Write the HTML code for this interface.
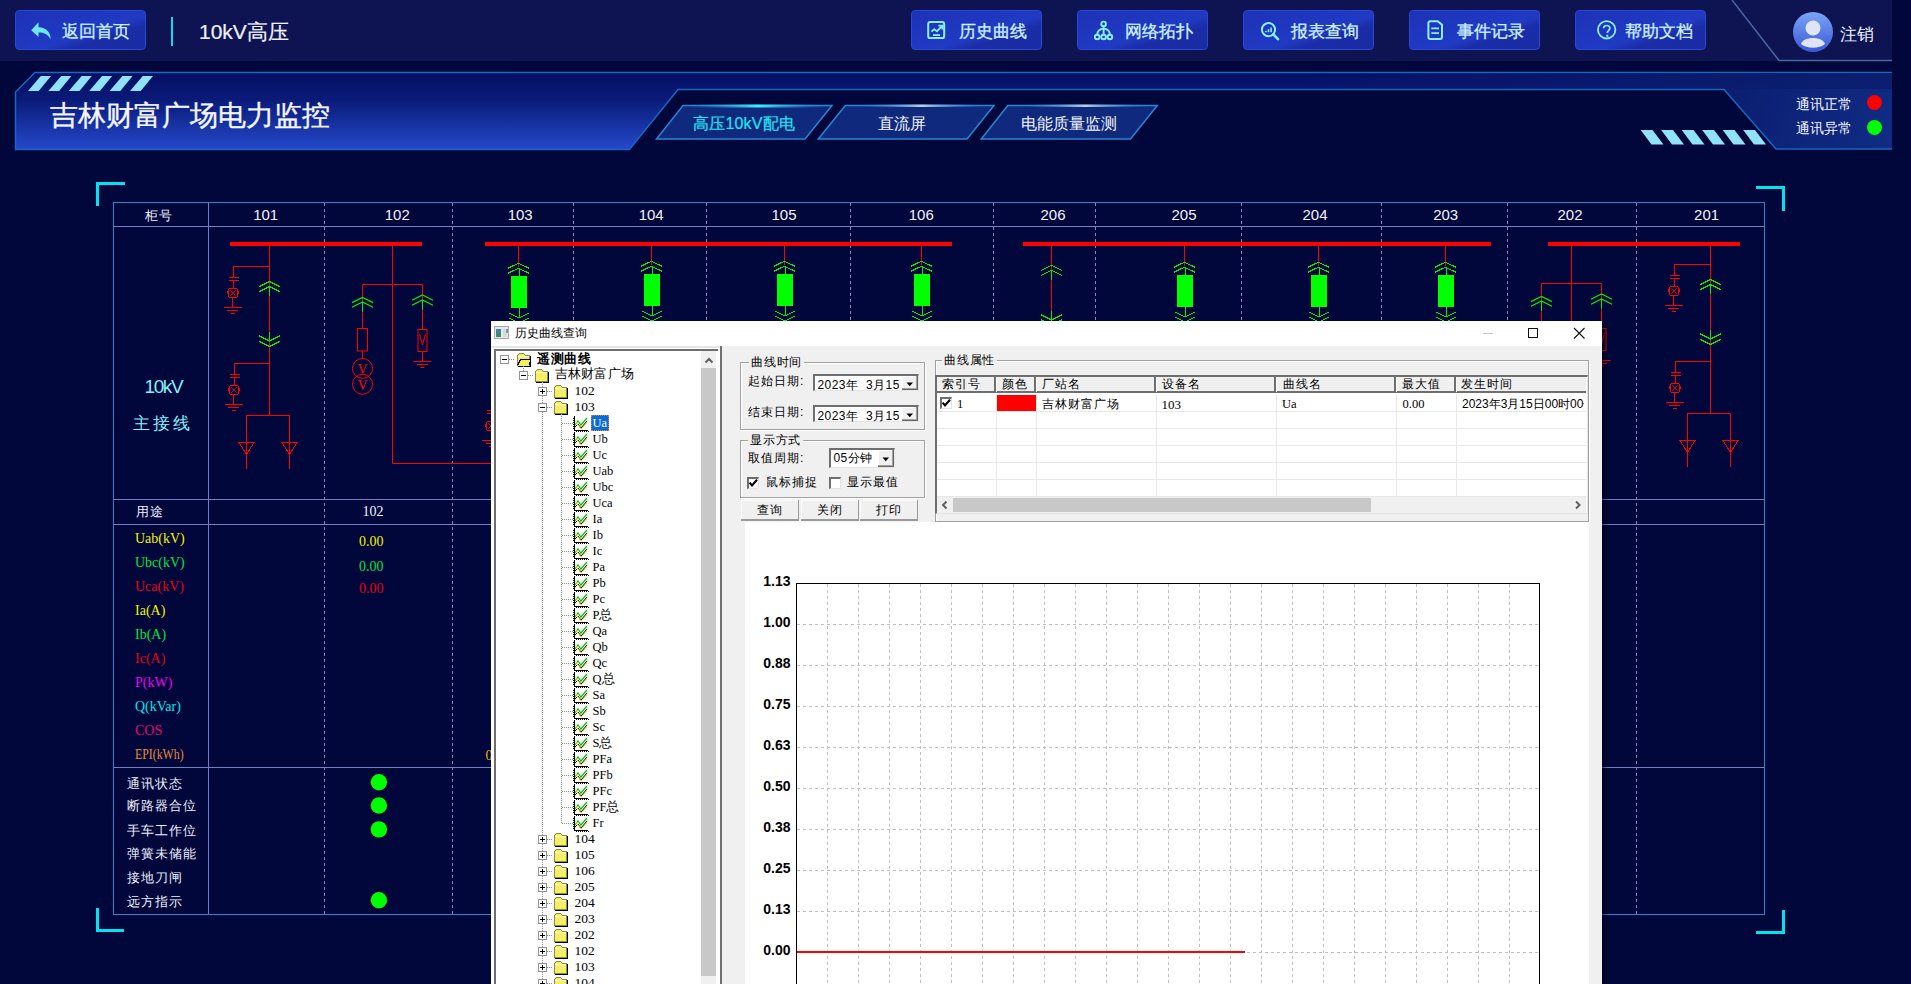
<!DOCTYPE html>
<html><head><meta charset="utf-8">
<style>
*{box-sizing:border-box}
html,body{margin:0;padding:0}
body{width:1911px;height:984px;overflow:hidden;position:relative;background:#01073a;font-family:"Liberation Sans",sans-serif}
.a{position:absolute;line-height:1;white-space:nowrap}
.hb{position:absolute;top:10px;width:131px;height:40px;border:1px solid #2c47d8;border-radius:4px;background:linear-gradient(162deg,#1d33b6 0%,#2039c2 50%,#213ac2 58%,#1a2da6 70%,#192ca4 100%)}
.hb span{position:absolute;top:12px;left:47px;font-size:17px;color:#cdf2fd;line-height:1;-webkit-text-stroke:0.3px #cdf2fd}
.hb svg{position:absolute}
.tab span{position:absolute;line-height:1;font-size:16px;color:#f0f4ff}
.ser{font-family:"Liberation Serif",serif}
.mono{font-family:"Liberation Mono",monospace}
</style></head><body>
<!-- HEADER -->
<div class="a" style="left:0;top:0;width:1892px;height:61px;background:#0e1452"></div>
<svg class="a" style="left:0;top:0" width="1911" height="160">
  <polyline points="1732,0 1779,60.5 1892,60.5" fill="none" stroke="#4866a4" stroke-width="1.5"/>
</svg>
<div class="hb" style="left:15px"><svg style="left:14px;top:9px" width="24" height="22"><path d="M8.5 2.2 L1.2 10.2 L8.5 17 L8.5 12.6 C14 12.3 18 14.4 20.5 19.2 C21 12 16 7.6 8.5 7.2 Z" fill="#6fe6fb"/></svg><span style="left:46px">返回首页</span></div>
<div class="a" style="left:171px;top:17px;width:2px;height:29px;background:#10d8ee"></div>
<div class="a" style="left:199px;top:21px;font-size:21px;color:#eef2ff;-webkit-text-stroke:0.2px #eef2ff">10kV高压</div>
<div class="hb" style="left:911px"><svg style="left:14px;top:10px" width="22" height="22"><rect x="2.2" y="1.1" width="16" height="16" rx="2.2" fill="none" stroke="#8cf0fc" stroke-width="2"/><path d="M5.4 10.6 L8.2 8.3 L10.9 10.3 L15.6 5.3" fill="none" stroke="#8cf0fc" stroke-width="1.8" stroke-linejoin="round"/><path d="M12.4 4.6 H16.3 V8.6" fill="none" stroke="#8cf0fc" stroke-width="1.8"/><path d="M7 14.1 H14" stroke="#8cf0fc" stroke-width="1.8"/></svg><span style="left:46.5px">历史曲线</span></div>
<div class="hb" style="left:1077px"><svg style="left:14px;top:8px" width="22" height="24"><circle cx="11.6" cy="4.9" r="2.3" fill="none" stroke="#8cf0fc" stroke-width="1.9"/><circle cx="5.2" cy="18" r="2.3" fill="none" stroke="#8cf0fc" stroke-width="1.9"/><circle cx="11.6" cy="18" r="2.3" fill="none" stroke="#8cf0fc" stroke-width="1.9"/><circle cx="17.9" cy="18" r="2.3" fill="none" stroke="#8cf0fc" stroke-width="1.9"/><path d="M11.6 7.2 V15.7 M5.2 15.7 C5.5 12 8 9.8 11.6 9.6 C15.2 9.8 17.7 12 17.9 15.7" fill="none" stroke="#8cf0fc" stroke-width="1.9"/></svg><span style="left:47.3px">网络拓扑</span></div>
<div class="hb" style="left:1243px"><svg style="left:15px;top:10px" width="24" height="24"><circle cx="9.5" cy="8.6" r="6.6" fill="none" stroke="#8cf0fc" stroke-width="2"/><path d="M14.3 13.4 L19 18.2" stroke="#8cf0fc" stroke-width="2.6" stroke-linecap="round"/><path d="M6.9 11.3 V9.8 M9.5 11.3 V8.2 M12.1 11.3 V6.6" stroke="#8cf0fc" stroke-width="1.6"/></svg><span style="left:47px">报表查询</span></div>
<div class="hb" style="left:1409px"><svg style="left:15px;top:9px" width="22" height="22"><path d="M3.4 3.2 Q3.4 1.2 5.4 1.2 H12.7 L17 4.7 V17 Q17 18.9 15 18.9 H5.4 Q3.4 18.9 3.4 17 Z" fill="none" stroke="#8cf0fc" stroke-width="2"/><path d="M6.3 8.4 H14 M6.3 13.2 H14" stroke="#8cf0fc" stroke-width="1.7"/></svg><span style="left:46.8px">事件记录</span></div>
<div class="hb" style="left:1575px"><svg style="left:19px;top:8px" width="24" height="24"><circle cx="11.65" cy="10.8" r="8.7" fill="none" stroke="#8cf0fc" stroke-width="1.8"/><path d="M8.6 9.2 C8.6 5.6 14.9 5.6 14.9 9.1 C14.9 11.2 12.3 11.6 12.3 14" fill="none" stroke="#8cf0fc" stroke-width="1.7"/><rect x="11.3" y="15.8" width="2" height="2" fill="#8cf0fc"/></svg><span style="left:48.5px">帮助文档</span></div>
<svg class="a" style="left:1793px;top:12px" width="40" height="40"><defs><linearGradient id="av" x1="0" y1="0" x2="0" y2="1"><stop offset="0" stop-color="#7aa6f4"/><stop offset="1" stop-color="#3a56d8"/></linearGradient></defs><circle cx="20" cy="20" r="20" fill="url(#av)"/><circle cx="20" cy="16" r="7.5" fill="#dfe5f5"/><path d="M8 32 C10 24 30 24 32 32 C26 37 14 37 8 32 Z" fill="#dfe5f5"/></svg>
<div class="a" style="left:1840px;top:26px;font-size:17px;color:#f0f2ff">注销</div>
<!-- BANNER -->
<svg class="a" style="left:0;top:0" width="1911" height="160">
  <defs>
    <linearGradient id="bn" x1="0" y1="72" x2="0" y2="150" gradientUnits="userSpaceOnUse"><stop offset="0" stop-color="#050f62"/><stop offset="0.35" stop-color="#0a1a78"/><stop offset="1" stop-color="#2449cc"/></linearGradient>
    <linearGradient id="bnr" x1="1724" y1="89" x2="1892" y2="150" gradientUnits="userSpaceOnUse"><stop offset="0" stop-color="#0b1e70"/><stop offset="1" stop-color="#102c84"/></linearGradient><linearGradient id="bnb" x1="0" y1="0" x2="1" y2="0"><stop offset="0" stop-color="#0c2070" stop-opacity="0"/><stop offset="1" stop-color="#0c2070" stop-opacity="0.9"/></linearGradient>
    <linearGradient id="tg" x1="0" y1="0" x2="1" y2="0"><stop offset="0" stop-color="#2a80d0" stop-opacity="0"/><stop offset="0.5" stop-color="#40f0ff"/><stop offset="1" stop-color="#2a80d0" stop-opacity="0"/></linearGradient>
    <linearGradient id="tw" x1="0" y1="0" x2="1" y2="0"><stop offset="0" stop-color="#2a80d0" stop-opacity="0"/><stop offset="0.5" stop-color="#b8d0ec"/><stop offset="1" stop-color="#2a80d0" stop-opacity="0"/></linearGradient>
  </defs>
  <polygon points="15.5,92 35,72.5 1892,72.5 1892,149.5 15.5,149.5" fill="url(#bn)"/><polyline points="1892,72.5 35,72.5 15.5,92 15.5,149.5 629,149.5" fill="none" stroke="#1a66c0" stroke-width="1.5"/>
  <polygon points="1724,89 1892,89 1892,149.5 1776,149.5" fill="url(#bnr)"/><rect x="1300" y="73.2" width="592" height="16" fill="url(#bnb)"/>
  <polygon points="678,89.5 1724,89.5 1776,149 1892,149 1892,160 629,160 629,150" fill="#01073a"/>
  <polyline points="629,150 678,89.5 1724,89.5 1776,149 1892,149" fill="none" stroke="#1a66c0" stroke-width="1.5"/>
  <g fill="#8fe2f8">
    <polygon points="28,91 38.7,91 51,76 40.8,76"/>
    <polygon points="48.4,91 59.1,91 71.4,76 61.2,76"/>
    <polygon points="68.8,91 79.5,91 91.8,76 81.6,76"/>
    <polygon points="89.2,91 99.9,91 112.2,76 102,76"/>
    <polygon points="109.6,91 120.3,91 132.6,76 122.4,76"/>
    <polygon points="130,91 140.7,91 153,76 142.8,76"/>
  </g>
  <g fill="#8fe2f8">
    <polygon points="1640.7,130 1652.5,130 1663.5,144.5 1651.5,144.5"/>
    <polygon points="1661.2,130 1673,130 1684,144.5 1672,144.5"/>
    <polygon points="1681.7,130 1693.5,130 1704.5,144.5 1692.5,144.5"/>
    <polygon points="1702.2,130 1714,130 1725,144.5 1713,144.5"/>
    <polygon points="1722.7,130 1734.5,130 1745.5,144.5 1733.5,144.5"/>
    <polygon points="1743.2,130 1755,130 1766,144.5 1754,144.5"/>
  </g>
  <!-- tabs -->
  <polygon points="683,105.5 832,105.5 805,139 656.5,139" fill="#0f2a7c" stroke="#2c84d4" stroke-width="1.5"/>
  <rect x="688" y="104.5" width="140" height="3" fill="url(#tg)"/>
  <polygon points="845.3,105.5 994,105.5 967,139 818.3,139" fill="#0f2a7c" stroke="#2c84d4" stroke-width="1.5"/>
  <rect x="862" y="104.5" width="120" height="2.5" fill="url(#tw)"/>
  <polygon points="1007.8,105.5 1157.3,105.5 1130.5,139 981.3,139" fill="#0f2a7c" stroke="#2c84d4" stroke-width="1.5"/>
  <rect x="1025" y="104.5" width="120" height="2.5" fill="url(#tw)"/>
  <circle cx="1874.5" cy="102.5" r="7.5" fill="#ff0000"/>
  <circle cx="1874.5" cy="127.5" r="7.5" fill="#00ff00"/>
</svg>
<div class="a" style="left:50px;top:102px;font-size:28px;color:#f4f6ff;-webkit-text-stroke:0.35px #f4f6ff">吉林财富广场电力监控</div>
<div class="a" style="left:693px;top:116px;font-size:16px;color:#22e4f6;letter-spacing:0.2px;-webkit-text-stroke:0.2px #22e4f6">高压10kV配电</div>
<div class="a" style="left:878px;top:116px;font-size:16px;color:#f2f4ff">直流屏</div>
<div class="a" style="left:1021px;top:116px;font-size:16px;color:#f2f4ff">电能质量监测</div>
<div class="a" style="left:1796px;top:97px;font-size:14px;color:#f2f4ff">通讯正常</div>
<div class="a" style="left:1796px;top:121px;font-size:14px;color:#f2f4ff">通讯异常</div>
<svg class="a" style="left:0;top:0" width="1911" height="984"><rect x="96" y="182" width="29" height="3" fill="#00e4f2"/><rect x="96" y="182" width="3" height="24" fill="#00e4f2"/><rect x="1756" y="186" width="29" height="3" fill="#00e4f2"/><rect x="1782" y="186" width="3" height="25" fill="#00e4f2"/><rect x="96" y="908" width="3" height="24" fill="#00e4f2"/><rect x="96" y="929" width="28" height="3" fill="#00e4f2"/><rect x="1782" y="910" width="3" height="24" fill="#00e4f2"/><rect x="1756" y="931" width="29" height="3" fill="#00e4f2"/><g shape-rendering="crispEdges"><line x1="114" y1="226.5" x2="1764" y2="226.5" stroke="#6f7fc6" stroke-width="1"/><line x1="114" y1="499.5" x2="1764" y2="499.5" stroke="#6f7fc6" stroke-width="1"/><line x1="114" y1="524.5" x2="1764" y2="524.5" stroke="#6f7fc6" stroke-width="1"/><line x1="114" y1="767.5" x2="1764" y2="767.5" stroke="#6f7fc6" stroke-width="1"/><line x1="208.5" y1="203" x2="208.5" y2="914" stroke="#6f7fc6" stroke-width="1"/><line x1="324.5" y1="203" x2="324.5" y2="914" stroke="#7e87c8" stroke-width="1" stroke-dasharray="3 3"/><line x1="452.5" y1="203" x2="452.5" y2="914" stroke="#7e87c8" stroke-width="1" stroke-dasharray="3 3"/><line x1="573.5" y1="203" x2="573.5" y2="914" stroke="#7e87c8" stroke-width="1" stroke-dasharray="3 3"/><line x1="706.5" y1="203" x2="706.5" y2="914" stroke="#7e87c8" stroke-width="1" stroke-dasharray="3 3"/><line x1="850.5" y1="203" x2="850.5" y2="914" stroke="#7e87c8" stroke-width="1" stroke-dasharray="3 3"/><line x1="993.5" y1="203" x2="993.5" y2="914" stroke="#7e87c8" stroke-width="1" stroke-dasharray="3 3"/><line x1="1095.5" y1="203" x2="1095.5" y2="914" stroke="#7e87c8" stroke-width="1" stroke-dasharray="3 3"/><line x1="1241.5" y1="203" x2="1241.5" y2="914" stroke="#7e87c8" stroke-width="1" stroke-dasharray="3 3"/><line x1="1381.5" y1="203" x2="1381.5" y2="914" stroke="#7e87c8" stroke-width="1" stroke-dasharray="3 3"/><line x1="1507.5" y1="203" x2="1507.5" y2="914" stroke="#7e87c8" stroke-width="1" stroke-dasharray="3 3"/><line x1="1636.5" y1="203" x2="1636.5" y2="914" stroke="#7e87c8" stroke-width="1" stroke-dasharray="3 3"/><rect x="113.5" y="202.5" width="1651" height="712" fill="none" stroke="#1b8bd2"/></g><rect x="230" y="242" width="192" height="4" fill="#ff0000"/><rect x="485" y="242" width="467" height="4" fill="#ff0000"/><rect x="1023" y="242" width="468" height="4" fill="#ff0000"/><rect x="1548" y="242" width="192" height="4" fill="#ff0000"/><g shape-rendering="crispEdges"><line x1="269.5" y1="246" x2="269.5" y2="415.5" stroke="#ff0000" stroke-width="1"/><polyline points="268.5,266.5 233.5,266.5 233.5,277.5" fill="none" stroke="#ff0000"/><line x1="228.5" y1="277.5" x2="238.5" y2="277.5" stroke="#ff0000" stroke-width="1"/><line x1="228.5" y1="280.5" x2="238.5" y2="280.5" stroke="#ff0000" stroke-width="1"/><line x1="233.5" y1="280.5" x2="233.5" y2="288" stroke="#ff0000" stroke-width="1"/><path d="M229 288.5 H237 M229 297.5 H237 M228.5 289 V297 M237.5 289 V297 M227.5 291 V294 M238.5 291 V294" fill="none" stroke="#ff0000" shape-rendering="crispEdges"/><path d="M230.2 290.2 L235.8 295.8 M235.8 290.2 L230.2 295.8" stroke="#ff0000" stroke-width="0.9" shape-rendering="auto"/><line x1="232.5" y1="298" x2="232.5" y2="307.5" stroke="#ff0000" stroke-width="1"/><line x1="223.5" y1="307.5" x2="241.5" y2="307.5" stroke="#ff0000" stroke-width="1"/><line x1="227.0" y1="310.5" x2="238.0" y2="310.5" stroke="#ff0000" stroke-width="1"/><line x1="230.5" y1="313.5" x2="234.5" y2="313.5" stroke="#ff0000" stroke-width="1"/><polyline points="259.0,286.59999999999997 269.5,281.4 280.0,286.59999999999997" fill="none" stroke="#00f000" stroke-width="1.2"/><polyline points="259.0,291.7 269.5,286.5 280.0,291.7" fill="none" stroke="#00f000" stroke-width="1.2"/><line x1="269.5" y1="286.5" x2="269.5" y2="296" stroke="#00f000" stroke-width="1"/><line x1="269.5" y1="332" x2="269.5" y2="341" stroke="#00f000" stroke-width="1"/><polyline points="259.0,335.8 269.5,341 280.0,335.8" fill="none" stroke="#00f000" stroke-width="1.2"/><polyline points="259.0,341.40000000000003 269.5,346.6 280.0,341.40000000000003" fill="none" stroke="#00f000" stroke-width="1.2"/><polyline points="269.5,363.5 234.5,363.5 234.5,374.5" fill="none" stroke="#ff0000"/><line x1="229.5" y1="374.5" x2="239.5" y2="374.5" stroke="#ff0000" stroke-width="1"/><line x1="229.5" y1="377.5" x2="239.5" y2="377.5" stroke="#ff0000" stroke-width="1"/><line x1="234.5" y1="377.5" x2="234.5" y2="385" stroke="#ff0000" stroke-width="1"/><path d="M230 385.5 H238 M230 394.5 H238 M229.5 386 V394 M238.5 386 V394 M228.5 388 V391 M239.5 388 V391" fill="none" stroke="#ff0000" shape-rendering="crispEdges"/><path d="M231.2 387.2 L236.8 392.8 M236.8 387.2 L231.2 392.8" stroke="#ff0000" stroke-width="0.9" shape-rendering="auto"/><line x1="233.5" y1="395" x2="233.5" y2="404.5" stroke="#ff0000" stroke-width="1"/><line x1="224.5" y1="404.5" x2="242.5" y2="404.5" stroke="#ff0000" stroke-width="1"/><line x1="228.0" y1="407.5" x2="239.0" y2="407.5" stroke="#ff0000" stroke-width="1"/><line x1="231.5" y1="410.5" x2="235.5" y2="410.5" stroke="#ff0000" stroke-width="1"/><polyline points="246.5,469 246.5,415.5 289.5,415.5 289.5,469" fill="none" stroke="#ff0000"/><polygon points="239.0,442.5 254.0,442.5 246.5,454.5" fill="none" stroke="#ff0000"/><polygon points="282.0,442.5 297.0,442.5 289.5,454.5" fill="none" stroke="#ff0000"/><line x1="1710.5" y1="244" x2="1710.5" y2="413.5" stroke="#ff0000" stroke-width="1"/><polyline points="1709.5,264.5 1674.5,264.5 1674.5,275.5" fill="none" stroke="#ff0000"/><line x1="1669.5" y1="275.5" x2="1679.5" y2="275.5" stroke="#ff0000" stroke-width="1"/><line x1="1669.5" y1="278.5" x2="1679.5" y2="278.5" stroke="#ff0000" stroke-width="1"/><line x1="1674.5" y1="278.5" x2="1674.5" y2="286" stroke="#ff0000" stroke-width="1"/><path d="M1670 286.5 H1678 M1670 295.5 H1678 M1669.5 287 V295 M1678.5 287 V295 M1668.5 289 V292 M1679.5 289 V292" fill="none" stroke="#ff0000" shape-rendering="crispEdges"/><path d="M1671.2 288.2 L1676.8 293.8 M1676.8 288.2 L1671.2 293.8" stroke="#ff0000" stroke-width="0.9" shape-rendering="auto"/><line x1="1673.5" y1="296" x2="1673.5" y2="305.5" stroke="#ff0000" stroke-width="1"/><line x1="1664.5" y1="305.5" x2="1682.5" y2="305.5" stroke="#ff0000" stroke-width="1"/><line x1="1668.0" y1="308.5" x2="1679.0" y2="308.5" stroke="#ff0000" stroke-width="1"/><line x1="1671.5" y1="311.5" x2="1675.5" y2="311.5" stroke="#ff0000" stroke-width="1"/><polyline points="1700.0,284.59999999999997 1710.5,279.4 1721.0,284.59999999999997" fill="none" stroke="#00f000" stroke-width="1.2"/><polyline points="1700.0,289.7 1710.5,284.5 1721.0,289.7" fill="none" stroke="#00f000" stroke-width="1.2"/><line x1="1710.5" y1="284.5" x2="1710.5" y2="294" stroke="#00f000" stroke-width="1"/><line x1="1710.5" y1="330" x2="1710.5" y2="339" stroke="#00f000" stroke-width="1"/><polyline points="1700.0,333.8 1710.5,339 1721.0,333.8" fill="none" stroke="#00f000" stroke-width="1.2"/><polyline points="1700.0,339.40000000000003 1710.5,344.6 1721.0,339.40000000000003" fill="none" stroke="#00f000" stroke-width="1.2"/><polyline points="1710.5,361.5 1675.5,361.5 1675.5,372.5" fill="none" stroke="#ff0000"/><line x1="1670.5" y1="372.5" x2="1680.5" y2="372.5" stroke="#ff0000" stroke-width="1"/><line x1="1670.5" y1="375.5" x2="1680.5" y2="375.5" stroke="#ff0000" stroke-width="1"/><line x1="1675.5" y1="375.5" x2="1675.5" y2="383" stroke="#ff0000" stroke-width="1"/><path d="M1671 383.5 H1679 M1671 392.5 H1679 M1670.5 384 V392 M1679.5 384 V392 M1669.5 386 V389 M1680.5 386 V389" fill="none" stroke="#ff0000" shape-rendering="crispEdges"/><path d="M1672.2 385.2 L1677.8 390.8 M1677.8 385.2 L1672.2 390.8" stroke="#ff0000" stroke-width="0.9" shape-rendering="auto"/><line x1="1674.5" y1="393" x2="1674.5" y2="402.5" stroke="#ff0000" stroke-width="1"/><line x1="1665.5" y1="402.5" x2="1683.5" y2="402.5" stroke="#ff0000" stroke-width="1"/><line x1="1669.0" y1="405.5" x2="1680.0" y2="405.5" stroke="#ff0000" stroke-width="1"/><line x1="1672.5" y1="408.5" x2="1676.5" y2="408.5" stroke="#ff0000" stroke-width="1"/><polyline points="1687.5,467 1687.5,413.5 1730.5,413.5 1730.5,467" fill="none" stroke="#ff0000"/><polygon points="1680.0,440.5 1695.0,440.5 1687.5,452.5" fill="none" stroke="#ff0000"/><polygon points="1723.0,440.5 1738.0,440.5 1730.5,452.5" fill="none" stroke="#ff0000"/></g><polyline points="392.5,246 392.5,463.5 600,463.5" fill="none" stroke="#ff0000"/><polyline points="362.5,329 362.5,284.5 422.5,284.5 422.5,329.5" fill="none" stroke="#ff0000"/><polyline points="352.0,302.59999999999997 362.5,297.4 373.0,302.59999999999997" fill="none" stroke="#00f000" stroke-width="1.2"/><polyline points="352.0,307.2 362.5,302 373.0,307.2" fill="none" stroke="#00f000" stroke-width="1.2"/><line x1="362.5" y1="302" x2="362.5" y2="312" stroke="#00f000" stroke-width="1"/><rect x="357.5" y="328.5" width="10" height="22.5" fill="none" stroke="#ff0000"/><line x1="362.5" y1="351" x2="362.5" y2="358.5" stroke="#ff0000" stroke-width="1"/><circle cx="362.5" cy="368.4" r="10" fill="none" stroke="#ff0000"/><circle cx="362.5" cy="384.3" r="10" fill="none" stroke="#ff0000"/><text x="362.5" y="374" fill="#ff0000" font-family="Liberation Serif" font-size="14" text-anchor="middle">V</text><text x="362.5" y="390" fill="#ff0000" font-family="Liberation Serif" font-size="14" text-anchor="middle">V</text><polyline points="412.0,300.2 422.5,295 433.0,300.2" fill="none" stroke="#00f000" stroke-width="1.2"/><polyline points="412.0,305.2 422.5,300 433.0,305.2" fill="none" stroke="#00f000" stroke-width="1.2"/><line x1="422.5" y1="300" x2="422.5" y2="310" stroke="#00f000" stroke-width="1"/><rect x="418" y="329.5" width="9" height="22" fill="none" stroke="#ff0000"/><polyline points="419.5,334 422.5,345 425.5,334" fill="none" stroke="#ff0000"/><line x1="422.5" y1="351.5" x2="422.5" y2="361.5" stroke="#ff0000" stroke-width="1"/><line x1="413.5" y1="361.5" x2="431.5" y2="361.5" stroke="#ff0000" stroke-width="1"/><line x1="417.0" y1="364.5" x2="428.0" y2="364.5" stroke="#ff0000" stroke-width="1"/><line x1="420.5" y1="367.5" x2="424.5" y2="367.5" stroke="#ff0000" stroke-width="1"/><line x1="1571.5" y1="246" x2="1571.5" y2="600" stroke="#ff0000" stroke-width="1"/><polyline points="1541.5,328 1541.5,283.5 1601.5,283.5 1601.5,328.5" fill="none" stroke="#ff0000"/><polyline points="1531.0,301.59999999999997 1541.5,296.4 1552.0,301.59999999999997" fill="none" stroke="#00f000" stroke-width="1.2"/><polyline points="1531.0,306.2 1541.5,301 1552.0,306.2" fill="none" stroke="#00f000" stroke-width="1.2"/><line x1="1541.5" y1="301" x2="1541.5" y2="311" stroke="#00f000" stroke-width="1"/><rect x="1536.5" y="327.5" width="10" height="22.5" fill="none" stroke="#ff0000"/><line x1="1541.5" y1="350" x2="1541.5" y2="357.5" stroke="#ff0000" stroke-width="1"/><circle cx="1541.5" cy="367.4" r="10" fill="none" stroke="#ff0000"/><circle cx="1541.5" cy="383.3" r="10" fill="none" stroke="#ff0000"/><text x="1541.5" y="373" fill="#ff0000" font-family="Liberation Serif" font-size="14" text-anchor="middle">V</text><text x="1541.5" y="389" fill="#ff0000" font-family="Liberation Serif" font-size="14" text-anchor="middle">V</text><polyline points="1591.0,299.2 1601.5,294 1612.0,299.2" fill="none" stroke="#00f000" stroke-width="1.2"/><polyline points="1591.0,304.2 1601.5,299 1612.0,304.2" fill="none" stroke="#00f000" stroke-width="1.2"/><line x1="1601.5" y1="299" x2="1601.5" y2="309" stroke="#00f000" stroke-width="1"/><rect x="1597" y="328.5" width="9" height="22" fill="none" stroke="#ff0000"/><polyline points="1598.5,333 1601.5,344 1604.5,333" fill="none" stroke="#ff0000"/><line x1="1601.5" y1="350.5" x2="1601.5" y2="360.5" stroke="#ff0000" stroke-width="1"/><line x1="1592.5" y1="360.5" x2="1610.5" y2="360.5" stroke="#ff0000" stroke-width="1"/><line x1="1596.0" y1="363.5" x2="1607.0" y2="363.5" stroke="#ff0000" stroke-width="1"/><line x1="1599.5" y1="366.5" x2="1603.5" y2="366.5" stroke="#ff0000" stroke-width="1"/><g shape-rendering="crispEdges"><line x1="518.5" y1="246" x2="518.5" y2="267.2" stroke="#ff0000" stroke-width="1"/><polyline points="508.0,268.4 518.5,263.2 529.0,268.4" fill="none" stroke="#00f000" stroke-width="1.2"/><polyline points="508.0,273.4 518.5,268.2 529.0,273.4" fill="none" stroke="#00f000" stroke-width="1.2"/><line x1="519.0" y1="268.2" x2="519.0" y2="276" stroke="#00f000" stroke-width="1"/><rect x="511.0" y="276" width="16" height="32" fill="#00ff00"/><line x1="519.0" y1="308" x2="519.0" y2="318" stroke="#00f000" stroke-width="1"/><polyline points="508.5,312.8 519.0,318 529.5,312.8" fill="none" stroke="#00f000" stroke-width="1.2"/><polyline points="508.5,317.8 519.0,323 529.5,317.8" fill="none" stroke="#00f000" stroke-width="1.2"/><line x1="651.5" y1="246" x2="651.5" y2="265.2" stroke="#ff0000" stroke-width="1"/><polyline points="641.0,266.4 651.5,261.2 662.0,266.4" fill="none" stroke="#00f000" stroke-width="1.2"/><polyline points="641.0,271.4 651.5,266.2 662.0,271.4" fill="none" stroke="#00f000" stroke-width="1.2"/><line x1="652.0" y1="266.2" x2="652.0" y2="274" stroke="#00f000" stroke-width="1"/><rect x="644.0" y="274" width="16" height="32" fill="#00ff00"/><line x1="652.0" y1="306" x2="652.0" y2="316" stroke="#00f000" stroke-width="1"/><polyline points="641.5,310.8 652.0,316 662.5,310.8" fill="none" stroke="#00f000" stroke-width="1.2"/><polyline points="641.5,315.8 652.0,321 662.5,315.8" fill="none" stroke="#00f000" stroke-width="1.2"/><line x1="784.5" y1="246" x2="784.5" y2="265.2" stroke="#ff0000" stroke-width="1"/><polyline points="774.0,266.4 784.5,261.2 795.0,266.4" fill="none" stroke="#00f000" stroke-width="1.2"/><polyline points="774.0,271.4 784.5,266.2 795.0,271.4" fill="none" stroke="#00f000" stroke-width="1.2"/><line x1="785.0" y1="266.2" x2="785.0" y2="274" stroke="#00f000" stroke-width="1"/><rect x="777.0" y="274" width="16" height="32" fill="#00ff00"/><line x1="785.0" y1="306" x2="785.0" y2="316" stroke="#00f000" stroke-width="1"/><polyline points="774.5,310.8 785.0,316 795.5,310.8" fill="none" stroke="#00f000" stroke-width="1.2"/><polyline points="774.5,315.8 785.0,321 795.5,315.8" fill="none" stroke="#00f000" stroke-width="1.2"/><line x1="921.5" y1="246" x2="921.5" y2="265.2" stroke="#ff0000" stroke-width="1"/><polyline points="911.0,266.4 921.5,261.2 932.0,266.4" fill="none" stroke="#00f000" stroke-width="1.2"/><polyline points="911.0,271.4 921.5,266.2 932.0,271.4" fill="none" stroke="#00f000" stroke-width="1.2"/><line x1="922.0" y1="266.2" x2="922.0" y2="274" stroke="#00f000" stroke-width="1"/><rect x="914.0" y="274" width="16" height="32" fill="#00ff00"/><line x1="922.0" y1="306" x2="922.0" y2="316" stroke="#00f000" stroke-width="1"/><polyline points="911.5,310.8 922.0,316 932.5,310.8" fill="none" stroke="#00f000" stroke-width="1.2"/><polyline points="911.5,315.8 922.0,321 932.5,315.8" fill="none" stroke="#00f000" stroke-width="1.2"/><line x1="1184.5" y1="246" x2="1184.5" y2="266.2" stroke="#ff0000" stroke-width="1"/><polyline points="1174.0,267.4 1184.5,262.2 1195.0,267.4" fill="none" stroke="#00f000" stroke-width="1.2"/><polyline points="1174.0,272.4 1184.5,267.2 1195.0,272.4" fill="none" stroke="#00f000" stroke-width="1.2"/><line x1="1185.0" y1="267.2" x2="1185.0" y2="275" stroke="#00f000" stroke-width="1"/><rect x="1177.0" y="275" width="16" height="32" fill="#00ff00"/><line x1="1185.0" y1="307" x2="1185.0" y2="317" stroke="#00f000" stroke-width="1"/><polyline points="1174.5,311.8 1185.0,317 1195.5,311.8" fill="none" stroke="#00f000" stroke-width="1.2"/><polyline points="1174.5,316.8 1185.0,322 1195.5,316.8" fill="none" stroke="#00f000" stroke-width="1.2"/><line x1="1318.5" y1="246" x2="1318.5" y2="266.2" stroke="#ff0000" stroke-width="1"/><polyline points="1308.0,267.4 1318.5,262.2 1329.0,267.4" fill="none" stroke="#00f000" stroke-width="1.2"/><polyline points="1308.0,272.4 1318.5,267.2 1329.0,272.4" fill="none" stroke="#00f000" stroke-width="1.2"/><line x1="1319.0" y1="267.2" x2="1319.0" y2="275" stroke="#00f000" stroke-width="1"/><rect x="1311.0" y="275" width="16" height="32" fill="#00ff00"/><line x1="1319.0" y1="307" x2="1319.0" y2="317" stroke="#00f000" stroke-width="1"/><polyline points="1308.5,311.8 1319.0,317 1329.5,311.8" fill="none" stroke="#00f000" stroke-width="1.2"/><polyline points="1308.5,316.8 1319.0,322 1329.5,316.8" fill="none" stroke="#00f000" stroke-width="1.2"/><line x1="1445.5" y1="246" x2="1445.5" y2="266.2" stroke="#ff0000" stroke-width="1"/><polyline points="1435.0,267.4 1445.5,262.2 1456.0,267.4" fill="none" stroke="#00f000" stroke-width="1.2"/><polyline points="1435.0,272.4 1445.5,267.2 1456.0,272.4" fill="none" stroke="#00f000" stroke-width="1.2"/><line x1="1446.0" y1="267.2" x2="1446.0" y2="275" stroke="#00f000" stroke-width="1"/><rect x="1438.0" y="275" width="16" height="32" fill="#00ff00"/><line x1="1446.0" y1="307" x2="1446.0" y2="317" stroke="#00f000" stroke-width="1"/><polyline points="1435.5,311.8 1446.0,317 1456.5,311.8" fill="none" stroke="#00f000" stroke-width="1.2"/><polyline points="1435.5,316.8 1446.0,322 1456.5,316.8" fill="none" stroke="#00f000" stroke-width="1.2"/><line x1="1051.5" y1="246" x2="1051.5" y2="320" stroke="#ff0000" stroke-width="1"/><polyline points="1041.0,270.5 1051.5,265.3 1062.0,270.5" fill="none" stroke="#00f000" stroke-width="1.2"/><polyline points="1041.0,275.5 1051.5,270.3 1062.0,275.5" fill="none" stroke="#00f000" stroke-width="1.2"/><line x1="1051.5" y1="270.3" x2="1051.5" y2="280" stroke="#00f000" stroke-width="1"/><line x1="1051.5" y1="311" x2="1051.5" y2="320" stroke="#00f000" stroke-width="1"/><polyline points="1041.0,314.8 1051.5,320 1062.0,314.8" fill="none" stroke="#00f000" stroke-width="1.2"/><polyline points="1041.0,319.8 1051.5,325 1062.0,319.8" fill="none" stroke="#00f000" stroke-width="1.2"/><line x1="487" y1="410.5" x2="497" y2="410.5" stroke="#ff0000" stroke-width="1"/><line x1="487" y1="413.5" x2="497" y2="413.5" stroke="#ff0000" stroke-width="1"/><path d="M487 421.5 H495 M487 430.5 H495 M486.5 422 V430 M495.5 422 V430 M485.5 424 V427 M496.5 424 V427" fill="none" stroke="#ff0000" shape-rendering="crispEdges"/><path d="M488.2 423.2 L493.8 428.8 M493.8 423.2 L488.2 428.8" stroke="#ff0000" stroke-width="0.9" shape-rendering="auto"/><line x1="482" y1="440.5" x2="500" y2="440.5" stroke="#ff0000" stroke-width="1"/><line x1="485.5" y1="443.5" x2="496.5" y2="443.5" stroke="#ff0000" stroke-width="1"/><line x1="489" y1="446.5" x2="493" y2="446.5" stroke="#ff0000" stroke-width="1"/></g><circle cx="378.9" cy="782.3" r="8.2" fill="#00ff00"/><circle cx="378.9" cy="805.5" r="8.2" fill="#00ff00"/><circle cx="378.9" cy="829.4" r="8.2" fill="#00ff00"/><circle cx="378.9" cy="900.2" r="8.2" fill="#00ff00"/></svg><div class="a ser" style="left:145px;top:209px;font-size:13px;color:#eef0ff;letter-spacing:1px">柜号</div><div class="a" style="left:235.7px;width:60px;text-align:center;top:207px;font-size:15px;color:#f0f2ff">101</div><div class="a" style="left:367.3px;width:60px;text-align:center;top:207px;font-size:15px;color:#f0f2ff">102</div><div class="a" style="left:490.20000000000005px;width:60px;text-align:center;top:207px;font-size:15px;color:#f0f2ff">103</div><div class="a" style="left:621.2px;width:60px;text-align:center;top:207px;font-size:15px;color:#f0f2ff">104</div><div class="a" style="left:754px;width:60px;text-align:center;top:207px;font-size:15px;color:#f0f2ff">105</div><div class="a" style="left:891.3px;width:60px;text-align:center;top:207px;font-size:15px;color:#f0f2ff">106</div><div class="a" style="left:1023px;width:60px;text-align:center;top:207px;font-size:15px;color:#f0f2ff">206</div><div class="a" style="left:1154px;width:60px;text-align:center;top:207px;font-size:15px;color:#f0f2ff">205</div><div class="a" style="left:1285px;width:60px;text-align:center;top:207px;font-size:15px;color:#f0f2ff">204</div><div class="a" style="left:1415.7px;width:60px;text-align:center;top:207px;font-size:15px;color:#f0f2ff">203</div><div class="a" style="left:1540px;width:60px;text-align:center;top:207px;font-size:15px;color:#f0f2ff">202</div><div class="a" style="left:1676.6px;width:60px;text-align:center;top:207px;font-size:15px;color:#f0f2ff">201</div><div class="a " style="left:144.5px;top:377px;font-size:19px;color:#86eefc;letter-spacing:-1.4px">10kV</div><div class="a ser" style="left:133px;top:415px;font-size:17px;color:#86eefc;letter-spacing:3px">主接线</div><div class="a ser" style="left:135.5px;top:505px;font-size:13px;color:#eef0ff;letter-spacing:1px">用途</div><div class="a ser" style="left:135px;top:532px;font-size:14px;color:#f2f200;">Uab(kV)</div><div class="a ser" style="left:135px;top:556px;font-size:14px;color:#00e43a;">Ubc(kV)</div><div class="a ser" style="left:135px;top:580px;font-size:14px;color:#e80012;">Uca(kV)</div><div class="a ser" style="left:135px;top:604px;font-size:14px;color:#f2f200;">Ia(A)</div><div class="a ser" style="left:135px;top:628px;font-size:14px;color:#00e43a;">Ib(A)</div><div class="a ser" style="left:135px;top:652px;font-size:14px;color:#e80012;">Ic(A)</div><div class="a ser" style="left:135px;top:676px;font-size:14px;color:#ee00f2;">P(kW)</div><div class="a ser" style="left:135px;top:700px;font-size:14px;color:#00e4ea;">Q(kVar)</div><div class="a ser" style="left:135px;top:724px;font-size:14px;color:#f00078;">COS</div><div class="a ser" style="left:135px;top:748px;font-size:14px;color:#e88a3c;transform:scaleX(0.845);transform-origin:0 0">EPI(kWh)</div><div class="a ser" style="left:362.5px;top:505px;font-size:14px;color:#f0f2ff;">102</div><div class="a ser" style="left:359px;top:534.5px;font-size:14px;color:#f2f200;">0.00</div><div class="a ser" style="left:359px;top:559.5px;font-size:14px;color:#00e43a;">0.00</div><div class="a ser" style="left:359px;top:582px;font-size:14px;color:#e80012;">0.00</div><div class="a ser" style="left:485.5px;top:749px;font-size:14px;color:#f0b020;">0.00</div><div class="a ser" style="left:127px;top:777px;font-size:13px;color:#eef0ff;letter-spacing:1px">通讯状态</div><div class="a ser" style="left:127px;top:799.3px;font-size:13px;color:#eef0ff;letter-spacing:1px">断路器合位</div><div class="a ser" style="left:127px;top:823.5px;font-size:13px;color:#eef0ff;letter-spacing:1px">手车工作位</div><div class="a ser" style="left:127px;top:847px;font-size:13px;color:#eef0ff;letter-spacing:1px">弹簧未储能</div><div class="a ser" style="left:127px;top:870.5px;font-size:13px;color:#eef0ff;letter-spacing:1px">接地刀闸</div><div class="a ser" style="left:127px;top:894.5px;font-size:13px;color:#eef0ff;letter-spacing:1px">远方指示</div><div class="a" style="left:491px;top:321px;width:1111px;height:663px;background:#f0f0f0"></div><div class="a" style="left:491px;top:321px;width:1111px;height:25px;background:#fff"></div><div class="a" style="left:1601px;top:321px;width:1px;height:663px;background:#fff"></div><div class="a" style="left:1602px;top:323px;width:7px;height:661px;background:linear-gradient(90deg,rgba(0,0,0,0.45),rgba(0,0,0,0))"></div><svg class="a" style="left:494px;top:326px" width="16" height="14"><rect x="0.5" y="0.5" width="14" height="12" fill="#e8e8e8" stroke="#a8a8a8"/><rect x="2" y="3" width="5" height="8" fill="#3a8a70"/><rect x="2" y="3" width="5" height="3" fill="#4a7ab8"/><rect x="9" y="3" width="4" height="8" fill="#d8dcd8"/><rect x="12" y="3" width="2" height="4" fill="#6aa0c8"/></svg><div class="a" style="left:515px;top:327px;font-size:12px;color:#000">历史曲线查询</div><div class="a" style="left:1483px;top:333px;width:10px;height:1px;background:#c8c8c8"></div><div class="a" style="left:1528px;top:328px;width:10px;height:10px;border:1px solid #111"></div><svg class="a" style="left:1573px;top:327px" width="13" height="13"><path d="M1 1 L11.5 11.5 M11.5 1 L1 11.5" stroke="#111" stroke-width="1.1"/></svg><div class="a" style="left:491px;top:346px;width:229px;height:638px;background:#fff"></div><div class="a" style="left:491px;top:346px;width:229px;height:2px;background:#e6e6e6"></div><div class="a" style="left:720px;top:346px;width:2px;height:638px;background:#707070"></div><div class="a" style="left:494px;top:349px;width:224px;height:2px;background:#6e6e6e"></div><div class="a" style="left:494px;top:349px;width:2px;height:635px;background:#6e6e6e"></div><div class="a" style="left:716px;top:351px;width:2px;height:633px;background:#fff"></div><div class="a" style="left:701px;top:351px;width:15px;height:633px;background:#f0f0f0"></div><div class="a" style="left:701px;top:368px;width:15px;height:608px;background:#c8c8c8"></div><svg class="a" style="left:703px;top:355px" width="12" height="10"><path d="M2.5 7.5 L6 4 L9.5 7.5" fill="none" stroke="#606060" stroke-width="2"/></svg><svg class="a" style="left:491px;top:352px" width="210" height="632" shape-rendering="crispEdges"><rect x="9.5" y="3.5" width="8" height="8" fill="#fff" stroke="#939393"/><line x1="11" y1="7.5" x2="16" y2="7.5" stroke="#000"/><line x1="18" y1="7.5" x2="24" y2="7.5" stroke="#8c8c8c" stroke-dasharray="1 1"/><path d="M26.5 13.5 V3.5 L28.5 1.5 H32.5 L34.5 3.5 H38.5 V13.5 Z" fill="#f4f060" stroke="#8a8a50"/><path d="M27 14.5 H39.5 V4" fill="none" stroke="#000"/><line x1="27" y1="4.5" x2="38" y2="4.5" stroke="#fffff0"/><path d="M26.5 13.5 L29.5 7.5 H39.5 L38.5 13.5" fill="#f4f060" stroke="#000"/><line x1="32.5" y1="14" x2="32.5" y2="19" stroke="#8c8c8c" stroke-dasharray="1 1"/><rect x="28.5" y="19.5" width="8" height="8" fill="#fff" stroke="#939393"/><line x1="30" y1="23.5" x2="35" y2="23.5" stroke="#000"/><line x1="37" y1="23.5" x2="43" y2="23.5" stroke="#8c8c8c" stroke-dasharray="1 1"/><path d="M44.5 29.5 V19.5 L46.5 17.5 H50.5 L52.5 19.5 H56.5 V29.5 Z" fill="#f4f060" stroke="#8a8a50"/><path d="M45 30.5 H57.5 V20" fill="none" stroke="#000"/><line x1="45" y1="20.5" x2="56" y2="20.5" stroke="#fffff0"/><line x1="51.5" y1="30" x2="51.5" y2="633" stroke="#8c8c8c" stroke-dasharray="1 1"/><rect x="47.5" y="35.5" width="8" height="8" fill="#fff" stroke="#939393"/><line x1="49" y1="39.5" x2="54" y2="39.5" stroke="#000"/><line x1="51.5" y1="37" x2="51.5" y2="42" stroke="#000"/><line x1="56" y1="39.5" x2="62" y2="39.5" stroke="#8c8c8c" stroke-dasharray="1 1"/><path d="M63.5 45.5 V35.5 L65.5 33.5 H69.5 L71.5 35.5 H75.5 V45.5 Z" fill="#f4f060" stroke="#8a8a50"/><path d="M64 46.5 H76.5 V36" fill="none" stroke="#000"/><line x1="64" y1="36.5" x2="75" y2="36.5" stroke="#fffff0"/><rect x="47.5" y="51.5" width="8" height="8" fill="#fff" stroke="#939393"/><line x1="49" y1="55.5" x2="54" y2="55.5" stroke="#000"/><line x1="56" y1="55.5" x2="62" y2="55.5" stroke="#8c8c8c" stroke-dasharray="1 1"/><path d="M63.5 61.5 V51.5 L65.5 49.5 H69.5 L71.5 51.5 H75.5 V61.5 Z" fill="#f4f060" stroke="#8a8a50"/><path d="M64 62.5 H76.5 V52" fill="none" stroke="#000"/><line x1="64" y1="52.5" x2="75" y2="52.5" stroke="#fffff0"/><rect x="47.5" y="483.5" width="8" height="8" fill="#fff" stroke="#939393"/><line x1="49" y1="487.5" x2="54" y2="487.5" stroke="#000"/><line x1="51.5" y1="485" x2="51.5" y2="490" stroke="#000"/><line x1="56" y1="487.5" x2="62" y2="487.5" stroke="#8c8c8c" stroke-dasharray="1 1"/><path d="M63.5 493.5 V483.5 L65.5 481.5 H69.5 L71.5 483.5 H75.5 V493.5 Z" fill="#f4f060" stroke="#8a8a50"/><path d="M64 494.5 H76.5 V484" fill="none" stroke="#000"/><line x1="64" y1="484.5" x2="75" y2="484.5" stroke="#fffff0"/><rect x="47.5" y="499.5" width="8" height="8" fill="#fff" stroke="#939393"/><line x1="49" y1="503.5" x2="54" y2="503.5" stroke="#000"/><line x1="51.5" y1="501" x2="51.5" y2="506" stroke="#000"/><line x1="56" y1="503.5" x2="62" y2="503.5" stroke="#8c8c8c" stroke-dasharray="1 1"/><path d="M63.5 509.5 V499.5 L65.5 497.5 H69.5 L71.5 499.5 H75.5 V509.5 Z" fill="#f4f060" stroke="#8a8a50"/><path d="M64 510.5 H76.5 V500" fill="none" stroke="#000"/><line x1="64" y1="500.5" x2="75" y2="500.5" stroke="#fffff0"/><rect x="47.5" y="515.5" width="8" height="8" fill="#fff" stroke="#939393"/><line x1="49" y1="519.5" x2="54" y2="519.5" stroke="#000"/><line x1="51.5" y1="517" x2="51.5" y2="522" stroke="#000"/><line x1="56" y1="519.5" x2="62" y2="519.5" stroke="#8c8c8c" stroke-dasharray="1 1"/><path d="M63.5 525.5 V515.5 L65.5 513.5 H69.5 L71.5 515.5 H75.5 V525.5 Z" fill="#f4f060" stroke="#8a8a50"/><path d="M64 526.5 H76.5 V516" fill="none" stroke="#000"/><line x1="64" y1="516.5" x2="75" y2="516.5" stroke="#fffff0"/><rect x="47.5" y="531.5" width="8" height="8" fill="#fff" stroke="#939393"/><line x1="49" y1="535.5" x2="54" y2="535.5" stroke="#000"/><line x1="51.5" y1="533" x2="51.5" y2="538" stroke="#000"/><line x1="56" y1="535.5" x2="62" y2="535.5" stroke="#8c8c8c" stroke-dasharray="1 1"/><path d="M63.5 541.5 V531.5 L65.5 529.5 H69.5 L71.5 531.5 H75.5 V541.5 Z" fill="#f4f060" stroke="#8a8a50"/><path d="M64 542.5 H76.5 V532" fill="none" stroke="#000"/><line x1="64" y1="532.5" x2="75" y2="532.5" stroke="#fffff0"/><rect x="47.5" y="547.5" width="8" height="8" fill="#fff" stroke="#939393"/><line x1="49" y1="551.5" x2="54" y2="551.5" stroke="#000"/><line x1="51.5" y1="549" x2="51.5" y2="554" stroke="#000"/><line x1="56" y1="551.5" x2="62" y2="551.5" stroke="#8c8c8c" stroke-dasharray="1 1"/><path d="M63.5 557.5 V547.5 L65.5 545.5 H69.5 L71.5 547.5 H75.5 V557.5 Z" fill="#f4f060" stroke="#8a8a50"/><path d="M64 558.5 H76.5 V548" fill="none" stroke="#000"/><line x1="64" y1="548.5" x2="75" y2="548.5" stroke="#fffff0"/><rect x="47.5" y="563.5" width="8" height="8" fill="#fff" stroke="#939393"/><line x1="49" y1="567.5" x2="54" y2="567.5" stroke="#000"/><line x1="51.5" y1="565" x2="51.5" y2="570" stroke="#000"/><line x1="56" y1="567.5" x2="62" y2="567.5" stroke="#8c8c8c" stroke-dasharray="1 1"/><path d="M63.5 573.5 V563.5 L65.5 561.5 H69.5 L71.5 563.5 H75.5 V573.5 Z" fill="#f4f060" stroke="#8a8a50"/><path d="M64 574.5 H76.5 V564" fill="none" stroke="#000"/><line x1="64" y1="564.5" x2="75" y2="564.5" stroke="#fffff0"/><rect x="47.5" y="579.5" width="8" height="8" fill="#fff" stroke="#939393"/><line x1="49" y1="583.5" x2="54" y2="583.5" stroke="#000"/><line x1="51.5" y1="581" x2="51.5" y2="586" stroke="#000"/><line x1="56" y1="583.5" x2="62" y2="583.5" stroke="#8c8c8c" stroke-dasharray="1 1"/><path d="M63.5 589.5 V579.5 L65.5 577.5 H69.5 L71.5 579.5 H75.5 V589.5 Z" fill="#f4f060" stroke="#8a8a50"/><path d="M64 590.5 H76.5 V580" fill="none" stroke="#000"/><line x1="64" y1="580.5" x2="75" y2="580.5" stroke="#fffff0"/><rect x="47.5" y="595.5" width="8" height="8" fill="#fff" stroke="#939393"/><line x1="49" y1="599.5" x2="54" y2="599.5" stroke="#000"/><line x1="51.5" y1="597" x2="51.5" y2="602" stroke="#000"/><line x1="56" y1="599.5" x2="62" y2="599.5" stroke="#8c8c8c" stroke-dasharray="1 1"/><path d="M63.5 605.5 V595.5 L65.5 593.5 H69.5 L71.5 595.5 H75.5 V605.5 Z" fill="#f4f060" stroke="#8a8a50"/><path d="M64 606.5 H76.5 V596" fill="none" stroke="#000"/><line x1="64" y1="596.5" x2="75" y2="596.5" stroke="#fffff0"/><rect x="47.5" y="611.5" width="8" height="8" fill="#fff" stroke="#939393"/><line x1="49" y1="615.5" x2="54" y2="615.5" stroke="#000"/><line x1="51.5" y1="613" x2="51.5" y2="618" stroke="#000"/><line x1="56" y1="615.5" x2="62" y2="615.5" stroke="#8c8c8c" stroke-dasharray="1 1"/><path d="M63.5 621.5 V611.5 L65.5 609.5 H69.5 L71.5 611.5 H75.5 V621.5 Z" fill="#f4f060" stroke="#8a8a50"/><path d="M64 622.5 H76.5 V612" fill="none" stroke="#000"/><line x1="64" y1="612.5" x2="75" y2="612.5" stroke="#fffff0"/><rect x="47.5" y="627.5" width="8" height="8" fill="#fff" stroke="#939393"/><line x1="49" y1="631.5" x2="54" y2="631.5" stroke="#000"/><line x1="51.5" y1="629" x2="51.5" y2="634" stroke="#000"/><line x1="56" y1="631.5" x2="62" y2="631.5" stroke="#8c8c8c" stroke-dasharray="1 1"/><path d="M63.5 637.5 V627.5 L65.5 625.5 H69.5 L71.5 627.5 H75.5 V637.5 Z" fill="#f4f060" stroke="#8a8a50"/><path d="M64 638.5 H76.5 V628" fill="none" stroke="#000"/><line x1="64" y1="628.5" x2="75" y2="628.5" stroke="#fffff0"/><line x1="70.5" y1="62" x2="70.5" y2="471" stroke="#8c8c8c" stroke-dasharray="1 1"/><line x1="71" y1="71.5" x2="82" y2="71.5" stroke="#8c8c8c" stroke-dasharray="1 1"/><path d="M83.5 64 V78.5 H97" fill="none" stroke="#000"/><line x1="85.5" y1="78.5" x2="85.5" y2="79.5" stroke="#000"/><line x1="87.5" y1="78.5" x2="87.5" y2="79.5" stroke="#000"/><line x1="89.5" y1="78.5" x2="89.5" y2="79.5" stroke="#000"/><line x1="91.5" y1="78.5" x2="91.5" y2="79.5" stroke="#000"/><line x1="93.5" y1="78.5" x2="93.5" y2="79.5" stroke="#000"/><line x1="95.5" y1="78.5" x2="95.5" y2="79.5" stroke="#000"/><line x1="97.5" y1="78.5" x2="97.5" y2="79.5" stroke="#000"/><line x1="82" y1="66" x2="83" y2="66" stroke="#000"/><line x1="82" y1="68" x2="83" y2="68" stroke="#000"/><line x1="82" y1="70" x2="83" y2="70" stroke="#000"/><line x1="82" y1="72" x2="83" y2="72" stroke="#000"/><line x1="82" y1="74" x2="83" y2="74" stroke="#000"/><line x1="82" y1="76" x2="83" y2="76" stroke="#000"/><polyline points="84,73 87,69 90,73 96,66" fill="none" stroke="#00c000" stroke-width="1.2" shape-rendering="auto"/><polyline points="84,75 87,72 90,76 96,69" fill="none" stroke="#000" stroke-width="1" shape-rendering="auto"/><polyline points="84,69 90,77 96,71" fill="none" stroke="#f0e000" stroke-width="1" shape-rendering="auto"/><line x1="71" y1="87.5" x2="82" y2="87.5" stroke="#8c8c8c" stroke-dasharray="1 1"/><path d="M83.5 80 V94.5 H97" fill="none" stroke="#000"/><line x1="85.5" y1="94.5" x2="85.5" y2="95.5" stroke="#000"/><line x1="87.5" y1="94.5" x2="87.5" y2="95.5" stroke="#000"/><line x1="89.5" y1="94.5" x2="89.5" y2="95.5" stroke="#000"/><line x1="91.5" y1="94.5" x2="91.5" y2="95.5" stroke="#000"/><line x1="93.5" y1="94.5" x2="93.5" y2="95.5" stroke="#000"/><line x1="95.5" y1="94.5" x2="95.5" y2="95.5" stroke="#000"/><line x1="97.5" y1="94.5" x2="97.5" y2="95.5" stroke="#000"/><line x1="82" y1="82" x2="83" y2="82" stroke="#000"/><line x1="82" y1="84" x2="83" y2="84" stroke="#000"/><line x1="82" y1="86" x2="83" y2="86" stroke="#000"/><line x1="82" y1="88" x2="83" y2="88" stroke="#000"/><line x1="82" y1="90" x2="83" y2="90" stroke="#000"/><line x1="82" y1="92" x2="83" y2="92" stroke="#000"/><polyline points="84,89 87,85 90,89 96,82" fill="none" stroke="#00c000" stroke-width="1.2" shape-rendering="auto"/><polyline points="84,91 87,88 90,92 96,85" fill="none" stroke="#000" stroke-width="1" shape-rendering="auto"/><polyline points="84,85 90,93 96,87" fill="none" stroke="#f0e000" stroke-width="1" shape-rendering="auto"/><line x1="71" y1="103.5" x2="82" y2="103.5" stroke="#8c8c8c" stroke-dasharray="1 1"/><path d="M83.5 96 V110.5 H97" fill="none" stroke="#000"/><line x1="85.5" y1="110.5" x2="85.5" y2="111.5" stroke="#000"/><line x1="87.5" y1="110.5" x2="87.5" y2="111.5" stroke="#000"/><line x1="89.5" y1="110.5" x2="89.5" y2="111.5" stroke="#000"/><line x1="91.5" y1="110.5" x2="91.5" y2="111.5" stroke="#000"/><line x1="93.5" y1="110.5" x2="93.5" y2="111.5" stroke="#000"/><line x1="95.5" y1="110.5" x2="95.5" y2="111.5" stroke="#000"/><line x1="97.5" y1="110.5" x2="97.5" y2="111.5" stroke="#000"/><line x1="82" y1="98" x2="83" y2="98" stroke="#000"/><line x1="82" y1="100" x2="83" y2="100" stroke="#000"/><line x1="82" y1="102" x2="83" y2="102" stroke="#000"/><line x1="82" y1="104" x2="83" y2="104" stroke="#000"/><line x1="82" y1="106" x2="83" y2="106" stroke="#000"/><line x1="82" y1="108" x2="83" y2="108" stroke="#000"/><polyline points="84,105 87,101 90,105 96,98" fill="none" stroke="#00c000" stroke-width="1.2" shape-rendering="auto"/><polyline points="84,107 87,104 90,108 96,101" fill="none" stroke="#000" stroke-width="1" shape-rendering="auto"/><polyline points="84,101 90,109 96,103" fill="none" stroke="#f0e000" stroke-width="1" shape-rendering="auto"/><line x1="71" y1="119.5" x2="82" y2="119.5" stroke="#8c8c8c" stroke-dasharray="1 1"/><path d="M83.5 112 V126.5 H97" fill="none" stroke="#000"/><line x1="85.5" y1="126.5" x2="85.5" y2="127.5" stroke="#000"/><line x1="87.5" y1="126.5" x2="87.5" y2="127.5" stroke="#000"/><line x1="89.5" y1="126.5" x2="89.5" y2="127.5" stroke="#000"/><line x1="91.5" y1="126.5" x2="91.5" y2="127.5" stroke="#000"/><line x1="93.5" y1="126.5" x2="93.5" y2="127.5" stroke="#000"/><line x1="95.5" y1="126.5" x2="95.5" y2="127.5" stroke="#000"/><line x1="97.5" y1="126.5" x2="97.5" y2="127.5" stroke="#000"/><line x1="82" y1="114" x2="83" y2="114" stroke="#000"/><line x1="82" y1="116" x2="83" y2="116" stroke="#000"/><line x1="82" y1="118" x2="83" y2="118" stroke="#000"/><line x1="82" y1="120" x2="83" y2="120" stroke="#000"/><line x1="82" y1="122" x2="83" y2="122" stroke="#000"/><line x1="82" y1="124" x2="83" y2="124" stroke="#000"/><polyline points="84,121 87,117 90,121 96,114" fill="none" stroke="#00c000" stroke-width="1.2" shape-rendering="auto"/><polyline points="84,123 87,120 90,124 96,117" fill="none" stroke="#000" stroke-width="1" shape-rendering="auto"/><polyline points="84,117 90,125 96,119" fill="none" stroke="#f0e000" stroke-width="1" shape-rendering="auto"/><line x1="71" y1="135.5" x2="82" y2="135.5" stroke="#8c8c8c" stroke-dasharray="1 1"/><path d="M83.5 128 V142.5 H97" fill="none" stroke="#000"/><line x1="85.5" y1="142.5" x2="85.5" y2="143.5" stroke="#000"/><line x1="87.5" y1="142.5" x2="87.5" y2="143.5" stroke="#000"/><line x1="89.5" y1="142.5" x2="89.5" y2="143.5" stroke="#000"/><line x1="91.5" y1="142.5" x2="91.5" y2="143.5" stroke="#000"/><line x1="93.5" y1="142.5" x2="93.5" y2="143.5" stroke="#000"/><line x1="95.5" y1="142.5" x2="95.5" y2="143.5" stroke="#000"/><line x1="97.5" y1="142.5" x2="97.5" y2="143.5" stroke="#000"/><line x1="82" y1="130" x2="83" y2="130" stroke="#000"/><line x1="82" y1="132" x2="83" y2="132" stroke="#000"/><line x1="82" y1="134" x2="83" y2="134" stroke="#000"/><line x1="82" y1="136" x2="83" y2="136" stroke="#000"/><line x1="82" y1="138" x2="83" y2="138" stroke="#000"/><line x1="82" y1="140" x2="83" y2="140" stroke="#000"/><polyline points="84,137 87,133 90,137 96,130" fill="none" stroke="#00c000" stroke-width="1.2" shape-rendering="auto"/><polyline points="84,139 87,136 90,140 96,133" fill="none" stroke="#000" stroke-width="1" shape-rendering="auto"/><polyline points="84,133 90,141 96,135" fill="none" stroke="#f0e000" stroke-width="1" shape-rendering="auto"/><line x1="71" y1="151.5" x2="82" y2="151.5" stroke="#8c8c8c" stroke-dasharray="1 1"/><path d="M83.5 144 V158.5 H97" fill="none" stroke="#000"/><line x1="85.5" y1="158.5" x2="85.5" y2="159.5" stroke="#000"/><line x1="87.5" y1="158.5" x2="87.5" y2="159.5" stroke="#000"/><line x1="89.5" y1="158.5" x2="89.5" y2="159.5" stroke="#000"/><line x1="91.5" y1="158.5" x2="91.5" y2="159.5" stroke="#000"/><line x1="93.5" y1="158.5" x2="93.5" y2="159.5" stroke="#000"/><line x1="95.5" y1="158.5" x2="95.5" y2="159.5" stroke="#000"/><line x1="97.5" y1="158.5" x2="97.5" y2="159.5" stroke="#000"/><line x1="82" y1="146" x2="83" y2="146" stroke="#000"/><line x1="82" y1="148" x2="83" y2="148" stroke="#000"/><line x1="82" y1="150" x2="83" y2="150" stroke="#000"/><line x1="82" y1="152" x2="83" y2="152" stroke="#000"/><line x1="82" y1="154" x2="83" y2="154" stroke="#000"/><line x1="82" y1="156" x2="83" y2="156" stroke="#000"/><polyline points="84,153 87,149 90,153 96,146" fill="none" stroke="#00c000" stroke-width="1.2" shape-rendering="auto"/><polyline points="84,155 87,152 90,156 96,149" fill="none" stroke="#000" stroke-width="1" shape-rendering="auto"/><polyline points="84,149 90,157 96,151" fill="none" stroke="#f0e000" stroke-width="1" shape-rendering="auto"/><line x1="71" y1="167.5" x2="82" y2="167.5" stroke="#8c8c8c" stroke-dasharray="1 1"/><path d="M83.5 160 V174.5 H97" fill="none" stroke="#000"/><line x1="85.5" y1="174.5" x2="85.5" y2="175.5" stroke="#000"/><line x1="87.5" y1="174.5" x2="87.5" y2="175.5" stroke="#000"/><line x1="89.5" y1="174.5" x2="89.5" y2="175.5" stroke="#000"/><line x1="91.5" y1="174.5" x2="91.5" y2="175.5" stroke="#000"/><line x1="93.5" y1="174.5" x2="93.5" y2="175.5" stroke="#000"/><line x1="95.5" y1="174.5" x2="95.5" y2="175.5" stroke="#000"/><line x1="97.5" y1="174.5" x2="97.5" y2="175.5" stroke="#000"/><line x1="82" y1="162" x2="83" y2="162" stroke="#000"/><line x1="82" y1="164" x2="83" y2="164" stroke="#000"/><line x1="82" y1="166" x2="83" y2="166" stroke="#000"/><line x1="82" y1="168" x2="83" y2="168" stroke="#000"/><line x1="82" y1="170" x2="83" y2="170" stroke="#000"/><line x1="82" y1="172" x2="83" y2="172" stroke="#000"/><polyline points="84,169 87,165 90,169 96,162" fill="none" stroke="#00c000" stroke-width="1.2" shape-rendering="auto"/><polyline points="84,171 87,168 90,172 96,165" fill="none" stroke="#000" stroke-width="1" shape-rendering="auto"/><polyline points="84,165 90,173 96,167" fill="none" stroke="#f0e000" stroke-width="1" shape-rendering="auto"/><line x1="71" y1="183.5" x2="82" y2="183.5" stroke="#8c8c8c" stroke-dasharray="1 1"/><path d="M83.5 176 V190.5 H97" fill="none" stroke="#000"/><line x1="85.5" y1="190.5" x2="85.5" y2="191.5" stroke="#000"/><line x1="87.5" y1="190.5" x2="87.5" y2="191.5" stroke="#000"/><line x1="89.5" y1="190.5" x2="89.5" y2="191.5" stroke="#000"/><line x1="91.5" y1="190.5" x2="91.5" y2="191.5" stroke="#000"/><line x1="93.5" y1="190.5" x2="93.5" y2="191.5" stroke="#000"/><line x1="95.5" y1="190.5" x2="95.5" y2="191.5" stroke="#000"/><line x1="97.5" y1="190.5" x2="97.5" y2="191.5" stroke="#000"/><line x1="82" y1="178" x2="83" y2="178" stroke="#000"/><line x1="82" y1="180" x2="83" y2="180" stroke="#000"/><line x1="82" y1="182" x2="83" y2="182" stroke="#000"/><line x1="82" y1="184" x2="83" y2="184" stroke="#000"/><line x1="82" y1="186" x2="83" y2="186" stroke="#000"/><line x1="82" y1="188" x2="83" y2="188" stroke="#000"/><polyline points="84,185 87,181 90,185 96,178" fill="none" stroke="#00c000" stroke-width="1.2" shape-rendering="auto"/><polyline points="84,187 87,184 90,188 96,181" fill="none" stroke="#000" stroke-width="1" shape-rendering="auto"/><polyline points="84,181 90,189 96,183" fill="none" stroke="#f0e000" stroke-width="1" shape-rendering="auto"/><line x1="71" y1="199.5" x2="82" y2="199.5" stroke="#8c8c8c" stroke-dasharray="1 1"/><path d="M83.5 192 V206.5 H97" fill="none" stroke="#000"/><line x1="85.5" y1="206.5" x2="85.5" y2="207.5" stroke="#000"/><line x1="87.5" y1="206.5" x2="87.5" y2="207.5" stroke="#000"/><line x1="89.5" y1="206.5" x2="89.5" y2="207.5" stroke="#000"/><line x1="91.5" y1="206.5" x2="91.5" y2="207.5" stroke="#000"/><line x1="93.5" y1="206.5" x2="93.5" y2="207.5" stroke="#000"/><line x1="95.5" y1="206.5" x2="95.5" y2="207.5" stroke="#000"/><line x1="97.5" y1="206.5" x2="97.5" y2="207.5" stroke="#000"/><line x1="82" y1="194" x2="83" y2="194" stroke="#000"/><line x1="82" y1="196" x2="83" y2="196" stroke="#000"/><line x1="82" y1="198" x2="83" y2="198" stroke="#000"/><line x1="82" y1="200" x2="83" y2="200" stroke="#000"/><line x1="82" y1="202" x2="83" y2="202" stroke="#000"/><line x1="82" y1="204" x2="83" y2="204" stroke="#000"/><polyline points="84,201 87,197 90,201 96,194" fill="none" stroke="#00c000" stroke-width="1.2" shape-rendering="auto"/><polyline points="84,203 87,200 90,204 96,197" fill="none" stroke="#000" stroke-width="1" shape-rendering="auto"/><polyline points="84,197 90,205 96,199" fill="none" stroke="#f0e000" stroke-width="1" shape-rendering="auto"/><line x1="71" y1="215.5" x2="82" y2="215.5" stroke="#8c8c8c" stroke-dasharray="1 1"/><path d="M83.5 208 V222.5 H97" fill="none" stroke="#000"/><line x1="85.5" y1="222.5" x2="85.5" y2="223.5" stroke="#000"/><line x1="87.5" y1="222.5" x2="87.5" y2="223.5" stroke="#000"/><line x1="89.5" y1="222.5" x2="89.5" y2="223.5" stroke="#000"/><line x1="91.5" y1="222.5" x2="91.5" y2="223.5" stroke="#000"/><line x1="93.5" y1="222.5" x2="93.5" y2="223.5" stroke="#000"/><line x1="95.5" y1="222.5" x2="95.5" y2="223.5" stroke="#000"/><line x1="97.5" y1="222.5" x2="97.5" y2="223.5" stroke="#000"/><line x1="82" y1="210" x2="83" y2="210" stroke="#000"/><line x1="82" y1="212" x2="83" y2="212" stroke="#000"/><line x1="82" y1="214" x2="83" y2="214" stroke="#000"/><line x1="82" y1="216" x2="83" y2="216" stroke="#000"/><line x1="82" y1="218" x2="83" y2="218" stroke="#000"/><line x1="82" y1="220" x2="83" y2="220" stroke="#000"/><polyline points="84,217 87,213 90,217 96,210" fill="none" stroke="#00c000" stroke-width="1.2" shape-rendering="auto"/><polyline points="84,219 87,216 90,220 96,213" fill="none" stroke="#000" stroke-width="1" shape-rendering="auto"/><polyline points="84,213 90,221 96,215" fill="none" stroke="#f0e000" stroke-width="1" shape-rendering="auto"/><line x1="71" y1="231.5" x2="82" y2="231.5" stroke="#8c8c8c" stroke-dasharray="1 1"/><path d="M83.5 224 V238.5 H97" fill="none" stroke="#000"/><line x1="85.5" y1="238.5" x2="85.5" y2="239.5" stroke="#000"/><line x1="87.5" y1="238.5" x2="87.5" y2="239.5" stroke="#000"/><line x1="89.5" y1="238.5" x2="89.5" y2="239.5" stroke="#000"/><line x1="91.5" y1="238.5" x2="91.5" y2="239.5" stroke="#000"/><line x1="93.5" y1="238.5" x2="93.5" y2="239.5" stroke="#000"/><line x1="95.5" y1="238.5" x2="95.5" y2="239.5" stroke="#000"/><line x1="97.5" y1="238.5" x2="97.5" y2="239.5" stroke="#000"/><line x1="82" y1="226" x2="83" y2="226" stroke="#000"/><line x1="82" y1="228" x2="83" y2="228" stroke="#000"/><line x1="82" y1="230" x2="83" y2="230" stroke="#000"/><line x1="82" y1="232" x2="83" y2="232" stroke="#000"/><line x1="82" y1="234" x2="83" y2="234" stroke="#000"/><line x1="82" y1="236" x2="83" y2="236" stroke="#000"/><polyline points="84,233 87,229 90,233 96,226" fill="none" stroke="#00c000" stroke-width="1.2" shape-rendering="auto"/><polyline points="84,235 87,232 90,236 96,229" fill="none" stroke="#000" stroke-width="1" shape-rendering="auto"/><polyline points="84,229 90,237 96,231" fill="none" stroke="#f0e000" stroke-width="1" shape-rendering="auto"/><line x1="71" y1="247.5" x2="82" y2="247.5" stroke="#8c8c8c" stroke-dasharray="1 1"/><path d="M83.5 240 V254.5 H97" fill="none" stroke="#000"/><line x1="85.5" y1="254.5" x2="85.5" y2="255.5" stroke="#000"/><line x1="87.5" y1="254.5" x2="87.5" y2="255.5" stroke="#000"/><line x1="89.5" y1="254.5" x2="89.5" y2="255.5" stroke="#000"/><line x1="91.5" y1="254.5" x2="91.5" y2="255.5" stroke="#000"/><line x1="93.5" y1="254.5" x2="93.5" y2="255.5" stroke="#000"/><line x1="95.5" y1="254.5" x2="95.5" y2="255.5" stroke="#000"/><line x1="97.5" y1="254.5" x2="97.5" y2="255.5" stroke="#000"/><line x1="82" y1="242" x2="83" y2="242" stroke="#000"/><line x1="82" y1="244" x2="83" y2="244" stroke="#000"/><line x1="82" y1="246" x2="83" y2="246" stroke="#000"/><line x1="82" y1="248" x2="83" y2="248" stroke="#000"/><line x1="82" y1="250" x2="83" y2="250" stroke="#000"/><line x1="82" y1="252" x2="83" y2="252" stroke="#000"/><polyline points="84,249 87,245 90,249 96,242" fill="none" stroke="#00c000" stroke-width="1.2" shape-rendering="auto"/><polyline points="84,251 87,248 90,252 96,245" fill="none" stroke="#000" stroke-width="1" shape-rendering="auto"/><polyline points="84,245 90,253 96,247" fill="none" stroke="#f0e000" stroke-width="1" shape-rendering="auto"/><line x1="71" y1="263.5" x2="82" y2="263.5" stroke="#8c8c8c" stroke-dasharray="1 1"/><path d="M83.5 256 V270.5 H97" fill="none" stroke="#000"/><line x1="85.5" y1="270.5" x2="85.5" y2="271.5" stroke="#000"/><line x1="87.5" y1="270.5" x2="87.5" y2="271.5" stroke="#000"/><line x1="89.5" y1="270.5" x2="89.5" y2="271.5" stroke="#000"/><line x1="91.5" y1="270.5" x2="91.5" y2="271.5" stroke="#000"/><line x1="93.5" y1="270.5" x2="93.5" y2="271.5" stroke="#000"/><line x1="95.5" y1="270.5" x2="95.5" y2="271.5" stroke="#000"/><line x1="97.5" y1="270.5" x2="97.5" y2="271.5" stroke="#000"/><line x1="82" y1="258" x2="83" y2="258" stroke="#000"/><line x1="82" y1="260" x2="83" y2="260" stroke="#000"/><line x1="82" y1="262" x2="83" y2="262" stroke="#000"/><line x1="82" y1="264" x2="83" y2="264" stroke="#000"/><line x1="82" y1="266" x2="83" y2="266" stroke="#000"/><line x1="82" y1="268" x2="83" y2="268" stroke="#000"/><polyline points="84,265 87,261 90,265 96,258" fill="none" stroke="#00c000" stroke-width="1.2" shape-rendering="auto"/><polyline points="84,267 87,264 90,268 96,261" fill="none" stroke="#000" stroke-width="1" shape-rendering="auto"/><polyline points="84,261 90,269 96,263" fill="none" stroke="#f0e000" stroke-width="1" shape-rendering="auto"/><line x1="71" y1="279.5" x2="82" y2="279.5" stroke="#8c8c8c" stroke-dasharray="1 1"/><path d="M83.5 272 V286.5 H97" fill="none" stroke="#000"/><line x1="85.5" y1="286.5" x2="85.5" y2="287.5" stroke="#000"/><line x1="87.5" y1="286.5" x2="87.5" y2="287.5" stroke="#000"/><line x1="89.5" y1="286.5" x2="89.5" y2="287.5" stroke="#000"/><line x1="91.5" y1="286.5" x2="91.5" y2="287.5" stroke="#000"/><line x1="93.5" y1="286.5" x2="93.5" y2="287.5" stroke="#000"/><line x1="95.5" y1="286.5" x2="95.5" y2="287.5" stroke="#000"/><line x1="97.5" y1="286.5" x2="97.5" y2="287.5" stroke="#000"/><line x1="82" y1="274" x2="83" y2="274" stroke="#000"/><line x1="82" y1="276" x2="83" y2="276" stroke="#000"/><line x1="82" y1="278" x2="83" y2="278" stroke="#000"/><line x1="82" y1="280" x2="83" y2="280" stroke="#000"/><line x1="82" y1="282" x2="83" y2="282" stroke="#000"/><line x1="82" y1="284" x2="83" y2="284" stroke="#000"/><polyline points="84,281 87,277 90,281 96,274" fill="none" stroke="#00c000" stroke-width="1.2" shape-rendering="auto"/><polyline points="84,283 87,280 90,284 96,277" fill="none" stroke="#000" stroke-width="1" shape-rendering="auto"/><polyline points="84,277 90,285 96,279" fill="none" stroke="#f0e000" stroke-width="1" shape-rendering="auto"/><line x1="71" y1="295.5" x2="82" y2="295.5" stroke="#8c8c8c" stroke-dasharray="1 1"/><path d="M83.5 288 V302.5 H97" fill="none" stroke="#000"/><line x1="85.5" y1="302.5" x2="85.5" y2="303.5" stroke="#000"/><line x1="87.5" y1="302.5" x2="87.5" y2="303.5" stroke="#000"/><line x1="89.5" y1="302.5" x2="89.5" y2="303.5" stroke="#000"/><line x1="91.5" y1="302.5" x2="91.5" y2="303.5" stroke="#000"/><line x1="93.5" y1="302.5" x2="93.5" y2="303.5" stroke="#000"/><line x1="95.5" y1="302.5" x2="95.5" y2="303.5" stroke="#000"/><line x1="97.5" y1="302.5" x2="97.5" y2="303.5" stroke="#000"/><line x1="82" y1="290" x2="83" y2="290" stroke="#000"/><line x1="82" y1="292" x2="83" y2="292" stroke="#000"/><line x1="82" y1="294" x2="83" y2="294" stroke="#000"/><line x1="82" y1="296" x2="83" y2="296" stroke="#000"/><line x1="82" y1="298" x2="83" y2="298" stroke="#000"/><line x1="82" y1="300" x2="83" y2="300" stroke="#000"/><polyline points="84,297 87,293 90,297 96,290" fill="none" stroke="#00c000" stroke-width="1.2" shape-rendering="auto"/><polyline points="84,299 87,296 90,300 96,293" fill="none" stroke="#000" stroke-width="1" shape-rendering="auto"/><polyline points="84,293 90,301 96,295" fill="none" stroke="#f0e000" stroke-width="1" shape-rendering="auto"/><line x1="71" y1="311.5" x2="82" y2="311.5" stroke="#8c8c8c" stroke-dasharray="1 1"/><path d="M83.5 304 V318.5 H97" fill="none" stroke="#000"/><line x1="85.5" y1="318.5" x2="85.5" y2="319.5" stroke="#000"/><line x1="87.5" y1="318.5" x2="87.5" y2="319.5" stroke="#000"/><line x1="89.5" y1="318.5" x2="89.5" y2="319.5" stroke="#000"/><line x1="91.5" y1="318.5" x2="91.5" y2="319.5" stroke="#000"/><line x1="93.5" y1="318.5" x2="93.5" y2="319.5" stroke="#000"/><line x1="95.5" y1="318.5" x2="95.5" y2="319.5" stroke="#000"/><line x1="97.5" y1="318.5" x2="97.5" y2="319.5" stroke="#000"/><line x1="82" y1="306" x2="83" y2="306" stroke="#000"/><line x1="82" y1="308" x2="83" y2="308" stroke="#000"/><line x1="82" y1="310" x2="83" y2="310" stroke="#000"/><line x1="82" y1="312" x2="83" y2="312" stroke="#000"/><line x1="82" y1="314" x2="83" y2="314" stroke="#000"/><line x1="82" y1="316" x2="83" y2="316" stroke="#000"/><polyline points="84,313 87,309 90,313 96,306" fill="none" stroke="#00c000" stroke-width="1.2" shape-rendering="auto"/><polyline points="84,315 87,312 90,316 96,309" fill="none" stroke="#000" stroke-width="1" shape-rendering="auto"/><polyline points="84,309 90,317 96,311" fill="none" stroke="#f0e000" stroke-width="1" shape-rendering="auto"/><line x1="71" y1="327.5" x2="82" y2="327.5" stroke="#8c8c8c" stroke-dasharray="1 1"/><path d="M83.5 320 V334.5 H97" fill="none" stroke="#000"/><line x1="85.5" y1="334.5" x2="85.5" y2="335.5" stroke="#000"/><line x1="87.5" y1="334.5" x2="87.5" y2="335.5" stroke="#000"/><line x1="89.5" y1="334.5" x2="89.5" y2="335.5" stroke="#000"/><line x1="91.5" y1="334.5" x2="91.5" y2="335.5" stroke="#000"/><line x1="93.5" y1="334.5" x2="93.5" y2="335.5" stroke="#000"/><line x1="95.5" y1="334.5" x2="95.5" y2="335.5" stroke="#000"/><line x1="97.5" y1="334.5" x2="97.5" y2="335.5" stroke="#000"/><line x1="82" y1="322" x2="83" y2="322" stroke="#000"/><line x1="82" y1="324" x2="83" y2="324" stroke="#000"/><line x1="82" y1="326" x2="83" y2="326" stroke="#000"/><line x1="82" y1="328" x2="83" y2="328" stroke="#000"/><line x1="82" y1="330" x2="83" y2="330" stroke="#000"/><line x1="82" y1="332" x2="83" y2="332" stroke="#000"/><polyline points="84,329 87,325 90,329 96,322" fill="none" stroke="#00c000" stroke-width="1.2" shape-rendering="auto"/><polyline points="84,331 87,328 90,332 96,325" fill="none" stroke="#000" stroke-width="1" shape-rendering="auto"/><polyline points="84,325 90,333 96,327" fill="none" stroke="#f0e000" stroke-width="1" shape-rendering="auto"/><line x1="71" y1="343.5" x2="82" y2="343.5" stroke="#8c8c8c" stroke-dasharray="1 1"/><path d="M83.5 336 V350.5 H97" fill="none" stroke="#000"/><line x1="85.5" y1="350.5" x2="85.5" y2="351.5" stroke="#000"/><line x1="87.5" y1="350.5" x2="87.5" y2="351.5" stroke="#000"/><line x1="89.5" y1="350.5" x2="89.5" y2="351.5" stroke="#000"/><line x1="91.5" y1="350.5" x2="91.5" y2="351.5" stroke="#000"/><line x1="93.5" y1="350.5" x2="93.5" y2="351.5" stroke="#000"/><line x1="95.5" y1="350.5" x2="95.5" y2="351.5" stroke="#000"/><line x1="97.5" y1="350.5" x2="97.5" y2="351.5" stroke="#000"/><line x1="82" y1="338" x2="83" y2="338" stroke="#000"/><line x1="82" y1="340" x2="83" y2="340" stroke="#000"/><line x1="82" y1="342" x2="83" y2="342" stroke="#000"/><line x1="82" y1="344" x2="83" y2="344" stroke="#000"/><line x1="82" y1="346" x2="83" y2="346" stroke="#000"/><line x1="82" y1="348" x2="83" y2="348" stroke="#000"/><polyline points="84,345 87,341 90,345 96,338" fill="none" stroke="#00c000" stroke-width="1.2" shape-rendering="auto"/><polyline points="84,347 87,344 90,348 96,341" fill="none" stroke="#000" stroke-width="1" shape-rendering="auto"/><polyline points="84,341 90,349 96,343" fill="none" stroke="#f0e000" stroke-width="1" shape-rendering="auto"/><line x1="71" y1="359.5" x2="82" y2="359.5" stroke="#8c8c8c" stroke-dasharray="1 1"/><path d="M83.5 352 V366.5 H97" fill="none" stroke="#000"/><line x1="85.5" y1="366.5" x2="85.5" y2="367.5" stroke="#000"/><line x1="87.5" y1="366.5" x2="87.5" y2="367.5" stroke="#000"/><line x1="89.5" y1="366.5" x2="89.5" y2="367.5" stroke="#000"/><line x1="91.5" y1="366.5" x2="91.5" y2="367.5" stroke="#000"/><line x1="93.5" y1="366.5" x2="93.5" y2="367.5" stroke="#000"/><line x1="95.5" y1="366.5" x2="95.5" y2="367.5" stroke="#000"/><line x1="97.5" y1="366.5" x2="97.5" y2="367.5" stroke="#000"/><line x1="82" y1="354" x2="83" y2="354" stroke="#000"/><line x1="82" y1="356" x2="83" y2="356" stroke="#000"/><line x1="82" y1="358" x2="83" y2="358" stroke="#000"/><line x1="82" y1="360" x2="83" y2="360" stroke="#000"/><line x1="82" y1="362" x2="83" y2="362" stroke="#000"/><line x1="82" y1="364" x2="83" y2="364" stroke="#000"/><polyline points="84,361 87,357 90,361 96,354" fill="none" stroke="#00c000" stroke-width="1.2" shape-rendering="auto"/><polyline points="84,363 87,360 90,364 96,357" fill="none" stroke="#000" stroke-width="1" shape-rendering="auto"/><polyline points="84,357 90,365 96,359" fill="none" stroke="#f0e000" stroke-width="1" shape-rendering="auto"/><line x1="71" y1="375.5" x2="82" y2="375.5" stroke="#8c8c8c" stroke-dasharray="1 1"/><path d="M83.5 368 V382.5 H97" fill="none" stroke="#000"/><line x1="85.5" y1="382.5" x2="85.5" y2="383.5" stroke="#000"/><line x1="87.5" y1="382.5" x2="87.5" y2="383.5" stroke="#000"/><line x1="89.5" y1="382.5" x2="89.5" y2="383.5" stroke="#000"/><line x1="91.5" y1="382.5" x2="91.5" y2="383.5" stroke="#000"/><line x1="93.5" y1="382.5" x2="93.5" y2="383.5" stroke="#000"/><line x1="95.5" y1="382.5" x2="95.5" y2="383.5" stroke="#000"/><line x1="97.5" y1="382.5" x2="97.5" y2="383.5" stroke="#000"/><line x1="82" y1="370" x2="83" y2="370" stroke="#000"/><line x1="82" y1="372" x2="83" y2="372" stroke="#000"/><line x1="82" y1="374" x2="83" y2="374" stroke="#000"/><line x1="82" y1="376" x2="83" y2="376" stroke="#000"/><line x1="82" y1="378" x2="83" y2="378" stroke="#000"/><line x1="82" y1="380" x2="83" y2="380" stroke="#000"/><polyline points="84,377 87,373 90,377 96,370" fill="none" stroke="#00c000" stroke-width="1.2" shape-rendering="auto"/><polyline points="84,379 87,376 90,380 96,373" fill="none" stroke="#000" stroke-width="1" shape-rendering="auto"/><polyline points="84,373 90,381 96,375" fill="none" stroke="#f0e000" stroke-width="1" shape-rendering="auto"/><line x1="71" y1="391.5" x2="82" y2="391.5" stroke="#8c8c8c" stroke-dasharray="1 1"/><path d="M83.5 384 V398.5 H97" fill="none" stroke="#000"/><line x1="85.5" y1="398.5" x2="85.5" y2="399.5" stroke="#000"/><line x1="87.5" y1="398.5" x2="87.5" y2="399.5" stroke="#000"/><line x1="89.5" y1="398.5" x2="89.5" y2="399.5" stroke="#000"/><line x1="91.5" y1="398.5" x2="91.5" y2="399.5" stroke="#000"/><line x1="93.5" y1="398.5" x2="93.5" y2="399.5" stroke="#000"/><line x1="95.5" y1="398.5" x2="95.5" y2="399.5" stroke="#000"/><line x1="97.5" y1="398.5" x2="97.5" y2="399.5" stroke="#000"/><line x1="82" y1="386" x2="83" y2="386" stroke="#000"/><line x1="82" y1="388" x2="83" y2="388" stroke="#000"/><line x1="82" y1="390" x2="83" y2="390" stroke="#000"/><line x1="82" y1="392" x2="83" y2="392" stroke="#000"/><line x1="82" y1="394" x2="83" y2="394" stroke="#000"/><line x1="82" y1="396" x2="83" y2="396" stroke="#000"/><polyline points="84,393 87,389 90,393 96,386" fill="none" stroke="#00c000" stroke-width="1.2" shape-rendering="auto"/><polyline points="84,395 87,392 90,396 96,389" fill="none" stroke="#000" stroke-width="1" shape-rendering="auto"/><polyline points="84,389 90,397 96,391" fill="none" stroke="#f0e000" stroke-width="1" shape-rendering="auto"/><line x1="71" y1="407.5" x2="82" y2="407.5" stroke="#8c8c8c" stroke-dasharray="1 1"/><path d="M83.5 400 V414.5 H97" fill="none" stroke="#000"/><line x1="85.5" y1="414.5" x2="85.5" y2="415.5" stroke="#000"/><line x1="87.5" y1="414.5" x2="87.5" y2="415.5" stroke="#000"/><line x1="89.5" y1="414.5" x2="89.5" y2="415.5" stroke="#000"/><line x1="91.5" y1="414.5" x2="91.5" y2="415.5" stroke="#000"/><line x1="93.5" y1="414.5" x2="93.5" y2="415.5" stroke="#000"/><line x1="95.5" y1="414.5" x2="95.5" y2="415.5" stroke="#000"/><line x1="97.5" y1="414.5" x2="97.5" y2="415.5" stroke="#000"/><line x1="82" y1="402" x2="83" y2="402" stroke="#000"/><line x1="82" y1="404" x2="83" y2="404" stroke="#000"/><line x1="82" y1="406" x2="83" y2="406" stroke="#000"/><line x1="82" y1="408" x2="83" y2="408" stroke="#000"/><line x1="82" y1="410" x2="83" y2="410" stroke="#000"/><line x1="82" y1="412" x2="83" y2="412" stroke="#000"/><polyline points="84,409 87,405 90,409 96,402" fill="none" stroke="#00c000" stroke-width="1.2" shape-rendering="auto"/><polyline points="84,411 87,408 90,412 96,405" fill="none" stroke="#000" stroke-width="1" shape-rendering="auto"/><polyline points="84,405 90,413 96,407" fill="none" stroke="#f0e000" stroke-width="1" shape-rendering="auto"/><line x1="71" y1="423.5" x2="82" y2="423.5" stroke="#8c8c8c" stroke-dasharray="1 1"/><path d="M83.5 416 V430.5 H97" fill="none" stroke="#000"/><line x1="85.5" y1="430.5" x2="85.5" y2="431.5" stroke="#000"/><line x1="87.5" y1="430.5" x2="87.5" y2="431.5" stroke="#000"/><line x1="89.5" y1="430.5" x2="89.5" y2="431.5" stroke="#000"/><line x1="91.5" y1="430.5" x2="91.5" y2="431.5" stroke="#000"/><line x1="93.5" y1="430.5" x2="93.5" y2="431.5" stroke="#000"/><line x1="95.5" y1="430.5" x2="95.5" y2="431.5" stroke="#000"/><line x1="97.5" y1="430.5" x2="97.5" y2="431.5" stroke="#000"/><line x1="82" y1="418" x2="83" y2="418" stroke="#000"/><line x1="82" y1="420" x2="83" y2="420" stroke="#000"/><line x1="82" y1="422" x2="83" y2="422" stroke="#000"/><line x1="82" y1="424" x2="83" y2="424" stroke="#000"/><line x1="82" y1="426" x2="83" y2="426" stroke="#000"/><line x1="82" y1="428" x2="83" y2="428" stroke="#000"/><polyline points="84,425 87,421 90,425 96,418" fill="none" stroke="#00c000" stroke-width="1.2" shape-rendering="auto"/><polyline points="84,427 87,424 90,428 96,421" fill="none" stroke="#000" stroke-width="1" shape-rendering="auto"/><polyline points="84,421 90,429 96,423" fill="none" stroke="#f0e000" stroke-width="1" shape-rendering="auto"/><line x1="71" y1="439.5" x2="82" y2="439.5" stroke="#8c8c8c" stroke-dasharray="1 1"/><path d="M83.5 432 V446.5 H97" fill="none" stroke="#000"/><line x1="85.5" y1="446.5" x2="85.5" y2="447.5" stroke="#000"/><line x1="87.5" y1="446.5" x2="87.5" y2="447.5" stroke="#000"/><line x1="89.5" y1="446.5" x2="89.5" y2="447.5" stroke="#000"/><line x1="91.5" y1="446.5" x2="91.5" y2="447.5" stroke="#000"/><line x1="93.5" y1="446.5" x2="93.5" y2="447.5" stroke="#000"/><line x1="95.5" y1="446.5" x2="95.5" y2="447.5" stroke="#000"/><line x1="97.5" y1="446.5" x2="97.5" y2="447.5" stroke="#000"/><line x1="82" y1="434" x2="83" y2="434" stroke="#000"/><line x1="82" y1="436" x2="83" y2="436" stroke="#000"/><line x1="82" y1="438" x2="83" y2="438" stroke="#000"/><line x1="82" y1="440" x2="83" y2="440" stroke="#000"/><line x1="82" y1="442" x2="83" y2="442" stroke="#000"/><line x1="82" y1="444" x2="83" y2="444" stroke="#000"/><polyline points="84,441 87,437 90,441 96,434" fill="none" stroke="#00c000" stroke-width="1.2" shape-rendering="auto"/><polyline points="84,443 87,440 90,444 96,437" fill="none" stroke="#000" stroke-width="1" shape-rendering="auto"/><polyline points="84,437 90,445 96,439" fill="none" stroke="#f0e000" stroke-width="1" shape-rendering="auto"/><line x1="71" y1="455.5" x2="82" y2="455.5" stroke="#8c8c8c" stroke-dasharray="1 1"/><path d="M83.5 448 V462.5 H97" fill="none" stroke="#000"/><line x1="85.5" y1="462.5" x2="85.5" y2="463.5" stroke="#000"/><line x1="87.5" y1="462.5" x2="87.5" y2="463.5" stroke="#000"/><line x1="89.5" y1="462.5" x2="89.5" y2="463.5" stroke="#000"/><line x1="91.5" y1="462.5" x2="91.5" y2="463.5" stroke="#000"/><line x1="93.5" y1="462.5" x2="93.5" y2="463.5" stroke="#000"/><line x1="95.5" y1="462.5" x2="95.5" y2="463.5" stroke="#000"/><line x1="97.5" y1="462.5" x2="97.5" y2="463.5" stroke="#000"/><line x1="82" y1="450" x2="83" y2="450" stroke="#000"/><line x1="82" y1="452" x2="83" y2="452" stroke="#000"/><line x1="82" y1="454" x2="83" y2="454" stroke="#000"/><line x1="82" y1="456" x2="83" y2="456" stroke="#000"/><line x1="82" y1="458" x2="83" y2="458" stroke="#000"/><line x1="82" y1="460" x2="83" y2="460" stroke="#000"/><polyline points="84,457 87,453 90,457 96,450" fill="none" stroke="#00c000" stroke-width="1.2" shape-rendering="auto"/><polyline points="84,459 87,456 90,460 96,453" fill="none" stroke="#000" stroke-width="1" shape-rendering="auto"/><polyline points="84,453 90,461 96,455" fill="none" stroke="#f0e000" stroke-width="1" shape-rendering="auto"/><line x1="71" y1="471.5" x2="82" y2="471.5" stroke="#8c8c8c" stroke-dasharray="1 1"/><path d="M83.5 464 V478.5 H97" fill="none" stroke="#000"/><line x1="85.5" y1="478.5" x2="85.5" y2="479.5" stroke="#000"/><line x1="87.5" y1="478.5" x2="87.5" y2="479.5" stroke="#000"/><line x1="89.5" y1="478.5" x2="89.5" y2="479.5" stroke="#000"/><line x1="91.5" y1="478.5" x2="91.5" y2="479.5" stroke="#000"/><line x1="93.5" y1="478.5" x2="93.5" y2="479.5" stroke="#000"/><line x1="95.5" y1="478.5" x2="95.5" y2="479.5" stroke="#000"/><line x1="97.5" y1="478.5" x2="97.5" y2="479.5" stroke="#000"/><line x1="82" y1="466" x2="83" y2="466" stroke="#000"/><line x1="82" y1="468" x2="83" y2="468" stroke="#000"/><line x1="82" y1="470" x2="83" y2="470" stroke="#000"/><line x1="82" y1="472" x2="83" y2="472" stroke="#000"/><line x1="82" y1="474" x2="83" y2="474" stroke="#000"/><line x1="82" y1="476" x2="83" y2="476" stroke="#000"/><polyline points="84,473 87,469 90,473 96,466" fill="none" stroke="#00c000" stroke-width="1.2" shape-rendering="auto"/><polyline points="84,475 87,472 90,476 96,469" fill="none" stroke="#000" stroke-width="1" shape-rendering="auto"/><polyline points="84,469 90,477 96,471" fill="none" stroke="#f0e000" stroke-width="1" shape-rendering="auto"/></svg><div class="a" style="left:537px;top:352px;font-size:13px;font-weight:bold;color:#000;letter-spacing:0.6px">遥测曲线</div><div class="a" style="left:554.5px;top:368px;font-size:12.5px;color:#000;letter-spacing:0.3px">吉林财富广场</div><div class="a ser" style="left:574.5px;top:383.5px;font-size:13.5px;color:#000">102</div><div class="a ser" style="left:574.5px;top:399.5px;font-size:13.5px;color:#000">103</div><div class="a ser" style="left:574.5px;top:831.5px;font-size:13.5px;color:#000">104</div><div class="a ser" style="left:574.5px;top:847.5px;font-size:13.5px;color:#000">105</div><div class="a ser" style="left:574.5px;top:863.5px;font-size:13.5px;color:#000">106</div><div class="a ser" style="left:574.5px;top:879.5px;font-size:13.5px;color:#000">205</div><div class="a ser" style="left:574.5px;top:895.5px;font-size:13.5px;color:#000">204</div><div class="a ser" style="left:574.5px;top:911.5px;font-size:13.5px;color:#000">203</div><div class="a ser" style="left:574.5px;top:927.5px;font-size:13.5px;color:#000">202</div><div class="a ser" style="left:574.5px;top:943.5px;font-size:13.5px;color:#000">102</div><div class="a ser" style="left:574.5px;top:959.5px;font-size:13.5px;color:#000">103</div><div class="a ser" style="left:574.5px;top:975.5px;font-size:13.5px;color:#000">104</div><div class="a" style="left:591px;top:415px;width:18px;height:16px;background:#0a6cd2;outline:1px dotted #e08030;outline-offset:-1px"></div><div class="a ser" style="left:592.5px;top:417px;font-size:12.5px;color:#fff">Ua</div><div class="a ser" style="left:592.5px;top:433px;font-size:12.5px;color:#000">Ub</div><div class="a ser" style="left:592.5px;top:449px;font-size:12.5px;color:#000">Uc</div><div class="a ser" style="left:592.5px;top:465px;font-size:12.5px;color:#000">Uab</div><div class="a ser" style="left:592.5px;top:481px;font-size:12.5px;color:#000">Ubc</div><div class="a ser" style="left:592.5px;top:497px;font-size:12.5px;color:#000">Uca</div><div class="a ser" style="left:592.5px;top:513px;font-size:12.5px;color:#000">Ia</div><div class="a ser" style="left:592.5px;top:529px;font-size:12.5px;color:#000">Ib</div><div class="a ser" style="left:592.5px;top:545px;font-size:12.5px;color:#000">Ic</div><div class="a ser" style="left:592.5px;top:561px;font-size:12.5px;color:#000">Pa</div><div class="a ser" style="left:592.5px;top:577px;font-size:12.5px;color:#000">Pb</div><div class="a ser" style="left:592.5px;top:593px;font-size:12.5px;color:#000">Pc</div><div class="a ser" style="left:592.5px;top:609px;font-size:12.5px;color:#000">P总</div><div class="a ser" style="left:592.5px;top:625px;font-size:12.5px;color:#000">Qa</div><div class="a ser" style="left:592.5px;top:641px;font-size:12.5px;color:#000">Qb</div><div class="a ser" style="left:592.5px;top:657px;font-size:12.5px;color:#000">Qc</div><div class="a ser" style="left:592.5px;top:673px;font-size:12.5px;color:#000">Q总</div><div class="a ser" style="left:592.5px;top:689px;font-size:12.5px;color:#000">Sa</div><div class="a ser" style="left:592.5px;top:705px;font-size:12.5px;color:#000">Sb</div><div class="a ser" style="left:592.5px;top:721px;font-size:12.5px;color:#000">Sc</div><div class="a ser" style="left:592.5px;top:737px;font-size:12.5px;color:#000">S总</div><div class="a ser" style="left:592.5px;top:753px;font-size:12.5px;color:#000">PFa</div><div class="a ser" style="left:592.5px;top:769px;font-size:12.5px;color:#000">PFb</div><div class="a ser" style="left:592.5px;top:785px;font-size:12.5px;color:#000">PFc</div><div class="a ser" style="left:592.5px;top:801px;font-size:12.5px;color:#000">PF总</div><div class="a ser" style="left:592.5px;top:817px;font-size:12.5px;color:#000">Fr</div><div class="a" style="left:722px;top:346px;width:880px;height:638px;background:#f0f0f0"></div><div class="a" style="left:740px;top:362px;width:185px;height:68px;border:1px solid #a0a0a0;box-shadow:inset 1px 1px 0 #fff,1px 1px 0 #fff"></div><div class="a" style="left:749px;top:356px;padding:0 2px;background:#f0f0f0;font-size:12px;color:#000;letter-spacing:0.8px">曲线时间</div><div class="a" style="left:740px;top:440px;width:185px;height:58px;border:1px solid #a0a0a0;box-shadow:inset 1px 1px 0 #fff,1px 1px 0 #fff"></div><div class="a" style="left:748px;top:434px;padding:0 2px;background:#f0f0f0;font-size:12px;color:#000;letter-spacing:0.8px">显示方式</div><div class="a" style="left:935px;top:360px;width:654px;height:162px;border:1px solid #a0a0a0;box-shadow:inset 1px 1px 0 #fff,1px 1px 0 #fff"></div><div class="a" style="left:942px;top:354px;padding:0 2px;background:#f0f0f0;font-size:12px;color:#000;letter-spacing:0.8px">曲线属性</div><div class="a" style="left:748px;top:375px;font-size:12px;color:#000;letter-spacing:1px">起始日期:</div><div class="a" style="left:748px;top:406px;font-size:12px;color:#000;letter-spacing:1px">结束日期:</div><div class="a" style="left:813px;top:374px;width:106px;height:17px;background:#fff;border-top:2px solid #6e6e6e;border-left:2px solid #6e6e6e;border-right:1px solid #e3e3e3;border-bottom:1px solid #e3e3e3"></div><div class="a" style="left:817.5px;top:378.5px;font-size:12px;color:#000;letter-spacing:0.45px">2023年&nbsp;&nbsp;3月15</div><div class="a" style="left:902px;top:376px;width:16px;height:14px;background:#f0f0f0;border-right:1px solid #696969;border-bottom:1px solid #696969;box-shadow:inset -1px -1px 0 #a0a0a0,inset 1px 1px 0 #fff"></div><svg class="a" style="left:905.5px;top:381.5px" width="9" height="6"><path d="M0.5 0.5 H7 L3.75 4.2 Z" fill="#000"/></svg><div class="a" style="left:813px;top:405px;width:106px;height:17px;background:#fff;border-top:2px solid #6e6e6e;border-left:2px solid #6e6e6e;border-right:1px solid #e3e3e3;border-bottom:1px solid #e3e3e3"></div><div class="a" style="left:817.5px;top:409.5px;font-size:12px;color:#000;letter-spacing:0.45px">2023年&nbsp;&nbsp;3月15</div><div class="a" style="left:902px;top:407px;width:16px;height:14px;background:#f0f0f0;border-right:1px solid #696969;border-bottom:1px solid #696969;box-shadow:inset -1px -1px 0 #a0a0a0,inset 1px 1px 0 #fff"></div><svg class="a" style="left:905.5px;top:412.5px" width="9" height="6"><path d="M0.5 0.5 H7 L3.75 4.2 Z" fill="#000"/></svg><div class="a" style="left:748px;top:452px;font-size:12px;color:#000;letter-spacing:1px">取值周期:</div><div class="a" style="left:829px;top:448px;width:66px;height:20px;background:#fff;border-top:2px solid #6e6e6e;border-left:2px solid #6e6e6e;border-right:1px solid #e3e3e3;border-bottom:1px solid #e3e3e3"></div><div class="a" style="left:833.5px;top:451.5px;font-size:12px;color:#000;letter-spacing:0.45px">05分钟</div><div class="a" style="left:878px;top:450px;width:16px;height:17px;background:#f0f0f0;border-right:1px solid #696969;border-bottom:1px solid #696969;box-shadow:inset -1px -1px 0 #a0a0a0,inset 1px 1px 0 #fff"></div><svg class="a" style="left:881.5px;top:457.0px" width="9" height="6"><path d="M0.5 0.5 H7 L3.75 4.2 Z" fill="#000"/></svg><div class="a" style="left:747px;top:477px;width:12px;height:12px;background:#fff;border-top:2px solid #6e6e6e;border-left:2px solid #6e6e6e;border-right:1px solid #e3e3e3;border-bottom:1px solid #e3e3e3"></div><svg class="a" style="left:747px;top:477px" width="13" height="13"><path d="M2.6 5.6 L5 8.4 L10 2.8" fill="none" stroke="#000" stroke-width="2.1"/></svg><div class="a" style="left:765.5px;top:476px;font-size:12px;color:#000;letter-spacing:1px">鼠标捕捉</div><div class="a" style="left:829px;top:477px;width:12px;height:12px;background:#fff;border-top:2px solid #6e6e6e;border-left:2px solid #6e6e6e;border-right:1px solid #e3e3e3;border-bottom:1px solid #e3e3e3"></div><div class="a" style="left:847px;top:476px;font-size:12px;color:#000;letter-spacing:1px">显示最值</div><div class="a" style="left:741px;top:500px;width:58px;height:21px;background:#f0f0f0;border-right:1px solid #9a9a9a;border-bottom:2px solid #9a9a9a;box-shadow:inset 1px 1px 0 #fcfcfc;text-align:center;font-size:12px;padding-top:4px;letter-spacing:1px">查询</div><div class="a" style="left:801px;top:500px;width:58px;height:21px;background:#f0f0f0;border-right:1px solid #9a9a9a;border-bottom:2px solid #9a9a9a;box-shadow:inset 1px 1px 0 #fcfcfc;text-align:center;font-size:12px;padding-top:4px;letter-spacing:1px">关闭</div><div class="a" style="left:860px;top:500px;width:58px;height:21px;background:#f0f0f0;border-right:1px solid #9a9a9a;border-bottom:2px solid #9a9a9a;box-shadow:inset 1px 1px 0 #fcfcfc;text-align:center;font-size:12px;padding-top:4px;letter-spacing:1px">打印</div><div class="a" style="left:935px;top:375px;width:653px;height:139px;background:#fff;border-top:2px solid #6e6e6e;border-left:2px solid #6e6e6e;border-right:1px solid #e3e3e3;border-bottom:1px solid #e3e3e3"></div><div class="a" style="left:937px;top:377px;width:649px;height:16px;background:#f0f0f0;border-bottom:2px solid #6e6e6e"></div><svg class="a" style="left:935px;top:375px" width="653" height="139" shape-rendering="crispEdges"><line x1="59.5" y1="2" x2="59.5" y2="17" stroke="#6e6e6e" stroke-width="2"/><line x1="61.5" y1="2" x2="61.5" y2="17" stroke="#fff"/><line x1="61.5" y1="19" x2="61.5" y2="122" stroke="#e8e8e8"/><line x1="99.5" y1="2" x2="99.5" y2="17" stroke="#6e6e6e" stroke-width="2"/><line x1="101.5" y1="2" x2="101.5" y2="17" stroke="#fff"/><line x1="101.5" y1="19" x2="101.5" y2="122" stroke="#e8e8e8"/><line x1="219.5" y1="2" x2="219.5" y2="17" stroke="#6e6e6e" stroke-width="2"/><line x1="221.5" y1="2" x2="221.5" y2="17" stroke="#fff"/><line x1="221.5" y1="19" x2="221.5" y2="122" stroke="#e8e8e8"/><line x1="339.5" y1="2" x2="339.5" y2="17" stroke="#6e6e6e" stroke-width="2"/><line x1="341.5" y1="2" x2="341.5" y2="17" stroke="#fff"/><line x1="341.5" y1="19" x2="341.5" y2="122" stroke="#e8e8e8"/><line x1="459.5" y1="2" x2="459.5" y2="17" stroke="#6e6e6e" stroke-width="2"/><line x1="461.5" y1="2" x2="461.5" y2="17" stroke="#fff"/><line x1="461.5" y1="19" x2="461.5" y2="122" stroke="#e8e8e8"/><line x1="519.5" y1="2" x2="519.5" y2="17" stroke="#6e6e6e" stroke-width="2"/><line x1="521.5" y1="2" x2="521.5" y2="17" stroke="#fff"/><line x1="521.5" y1="19" x2="521.5" y2="122" stroke="#e8e8e8"/><line x1="2" y1="36.5" x2="651" y2="36.5" stroke="#e8e8e8"/><line x1="2" y1="53.5" x2="651" y2="53.5" stroke="#e8e8e8"/><line x1="2" y1="70.5" x2="651" y2="70.5" stroke="#e8e8e8"/><line x1="2" y1="87.5" x2="651" y2="87.5" stroke="#e8e8e8"/><line x1="2" y1="104.5" x2="651" y2="104.5" stroke="#e8e8e8"/><line x1="2" y1="121.5" x2="651" y2="121.5" stroke="#e8e8e8"/></svg><div class="a" style="left:942px;top:378px;font-size:12px;color:#000;letter-spacing:1px">索引号</div><div class="a" style="left:1002px;top:378px;font-size:12px;color:#000;letter-spacing:1px">颜色</div><div class="a" style="left:1042px;top:378px;font-size:12px;color:#000;letter-spacing:1px">厂站名</div><div class="a" style="left:1162px;top:378px;font-size:12px;color:#000;letter-spacing:1px">设备名</div><div class="a" style="left:1283px;top:378px;font-size:12px;color:#000;letter-spacing:1px">曲线名</div><div class="a" style="left:1401.5px;top:378px;font-size:12px;color:#000;letter-spacing:1px">最大值</div><div class="a" style="left:1461px;top:378px;font-size:12px;color:#000;letter-spacing:1px">发生时间</div><div class="a" style="left:940px;top:397px;width:12px;height:12px;background:#fff;border-top:2px solid #6e6e6e;border-left:2px solid #6e6e6e;border-right:1px solid #e3e3e3;border-bottom:1px solid #e3e3e3"></div><svg class="a" style="left:940px;top:397px" width="13" height="13"><path d="M2.6 5.6 L5 8.4 L10 2.8" fill="none" stroke="#000" stroke-width="2.1"/></svg><div class="a" style="left:957px;top:398px;font-size:12.5px;color:#000;font-family:Liberation Serif">1</div><div class="a" style="left:997px;top:395px;width:39px;height:16px;background:#ff0000"></div><div class="a" style="left:1041.5px;top:398px;font-size:12px;color:#000;letter-spacing:1px">吉林财富广场</div><div class="a" style="left:1161.5px;top:398px;font-size:13px;color:#000;font-family:Liberation Serif">103</div><div class="a" style="left:1282px;top:398px;font-size:12.5px;color:#000;font-family:Liberation Serif">Ua</div><div class="a" style="left:1402.5px;top:398px;font-size:12.5px;color:#000;font-family:Liberation Serif">0.00</div><div class="a" style="left:1462px;top:398px;width:122px;overflow:hidden;font-size:12px;color:#000">2023年3月15日00时00分</div><div class="a" style="left:937px;top:497px;width:649px;height:16px;background:#f0f0f0"></div><div class="a" style="left:953px;top:498px;width:418px;height:14px;background:#c8c8c8"></div><svg class="a" style="left:939px;top:499px" width="12" height="12"><path d="M7.5 2.5 L4 6 L7.5 9.5" fill="none" stroke="#606060" stroke-width="2"/></svg><svg class="a" style="left:1572px;top:499px" width="12" height="12"><path d="M4 2.5 L7.5 6 L4 9.5" fill="none" stroke="#606060" stroke-width="2"/></svg><div class="a" style="left:745px;top:522px;width:844px;height:462px;background:#fff"></div><svg class="a" style="left:745px;top:522px" width="844" height="462" shape-rendering="crispEdges"><line x1="52" y1="102.5" x2="794" y2="102.5" stroke="#c0c0c0" stroke-dasharray="3 3"/><line x1="52" y1="143.5" x2="794" y2="143.5" stroke="#c0c0c0" stroke-dasharray="3 3"/><line x1="52" y1="184.5" x2="794" y2="184.5" stroke="#c0c0c0" stroke-dasharray="3 3"/><line x1="52" y1="225.5" x2="794" y2="225.5" stroke="#c0c0c0" stroke-dasharray="3 3"/><line x1="52" y1="266.5" x2="794" y2="266.5" stroke="#c0c0c0" stroke-dasharray="3 3"/><line x1="52" y1="307.5" x2="794" y2="307.5" stroke="#c0c0c0" stroke-dasharray="3 3"/><line x1="52" y1="348.5" x2="794" y2="348.5" stroke="#c0c0c0" stroke-dasharray="3 3"/><line x1="52" y1="389.5" x2="794" y2="389.5" stroke="#c0c0c0" stroke-dasharray="3 3"/><line x1="52" y1="430.5" x2="794" y2="430.5" stroke="#c0c0c0" stroke-dasharray="3 3"/><line x1="82.5" y1="62" x2="82.5" y2="462" stroke="#c0c0c0" stroke-dasharray="3 3"/><line x1="113.5" y1="62" x2="113.5" y2="462" stroke="#c0c0c0" stroke-dasharray="3 3"/><line x1="144.5" y1="62" x2="144.5" y2="462" stroke="#c0c0c0" stroke-dasharray="3 3"/><line x1="175.5" y1="62" x2="175.5" y2="462" stroke="#c0c0c0" stroke-dasharray="3 3"/><line x1="206.5" y1="62" x2="206.5" y2="462" stroke="#c0c0c0" stroke-dasharray="3 3"/><line x1="237.5" y1="62" x2="237.5" y2="462" stroke="#c0c0c0" stroke-dasharray="3 3"/><line x1="268.5" y1="62" x2="268.5" y2="462" stroke="#c0c0c0" stroke-dasharray="3 3"/><line x1="299.5" y1="62" x2="299.5" y2="462" stroke="#c0c0c0" stroke-dasharray="3 3"/><line x1="330.5" y1="62" x2="330.5" y2="462" stroke="#c0c0c0" stroke-dasharray="3 3"/><line x1="361.5" y1="62" x2="361.5" y2="462" stroke="#c0c0c0" stroke-dasharray="3 3"/><line x1="392.5" y1="62" x2="392.5" y2="462" stroke="#c0c0c0" stroke-dasharray="3 3"/><line x1="423.5" y1="62" x2="423.5" y2="462" stroke="#c0c0c0" stroke-dasharray="3 3"/><line x1="454.5" y1="62" x2="454.5" y2="462" stroke="#c0c0c0" stroke-dasharray="3 3"/><line x1="485.5" y1="62" x2="485.5" y2="462" stroke="#c0c0c0" stroke-dasharray="3 3"/><line x1="516.5" y1="62" x2="516.5" y2="462" stroke="#c0c0c0" stroke-dasharray="3 3"/><line x1="547.5" y1="62" x2="547.5" y2="462" stroke="#c0c0c0" stroke-dasharray="3 3"/><line x1="578.5" y1="62" x2="578.5" y2="462" stroke="#c0c0c0" stroke-dasharray="3 3"/><line x1="609.5" y1="62" x2="609.5" y2="462" stroke="#c0c0c0" stroke-dasharray="3 3"/><line x1="640.5" y1="62" x2="640.5" y2="462" stroke="#c0c0c0" stroke-dasharray="3 3"/><line x1="671.5" y1="62" x2="671.5" y2="462" stroke="#c0c0c0" stroke-dasharray="3 3"/><line x1="702.5" y1="62" x2="702.5" y2="462" stroke="#c0c0c0" stroke-dasharray="3 3"/><line x1="733.5" y1="62" x2="733.5" y2="462" stroke="#c0c0c0" stroke-dasharray="3 3"/><line x1="764.5" y1="62" x2="764.5" y2="462" stroke="#c0c0c0" stroke-dasharray="3 3"/><path d="M51.5 462 V61.5 H794.5 V462" fill="none" stroke="#000"/><rect x="52" y="429" width="448" height="2" fill="#ff0000"/></svg><div class="a" style="left:740px;width:50.5px;text-align:right;top:574px;font-size:14px;font-weight:bold;color:#000">1.13</div><div class="a" style="left:740px;width:50.5px;text-align:right;top:615px;font-size:14px;font-weight:bold;color:#000">1.00</div><div class="a" style="left:740px;width:50.5px;text-align:right;top:656px;font-size:14px;font-weight:bold;color:#000">0.88</div><div class="a" style="left:740px;width:50.5px;text-align:right;top:697px;font-size:14px;font-weight:bold;color:#000">0.75</div><div class="a" style="left:740px;width:50.5px;text-align:right;top:738px;font-size:14px;font-weight:bold;color:#000">0.63</div><div class="a" style="left:740px;width:50.5px;text-align:right;top:779px;font-size:14px;font-weight:bold;color:#000">0.50</div><div class="a" style="left:740px;width:50.5px;text-align:right;top:820px;font-size:14px;font-weight:bold;color:#000">0.38</div><div class="a" style="left:740px;width:50.5px;text-align:right;top:861px;font-size:14px;font-weight:bold;color:#000">0.25</div><div class="a" style="left:740px;width:50.5px;text-align:right;top:902px;font-size:14px;font-weight:bold;color:#000">0.13</div><div class="a" style="left:740px;width:50.5px;text-align:right;top:943px;font-size:14px;font-weight:bold;color:#000">0.00</div></body></html>
